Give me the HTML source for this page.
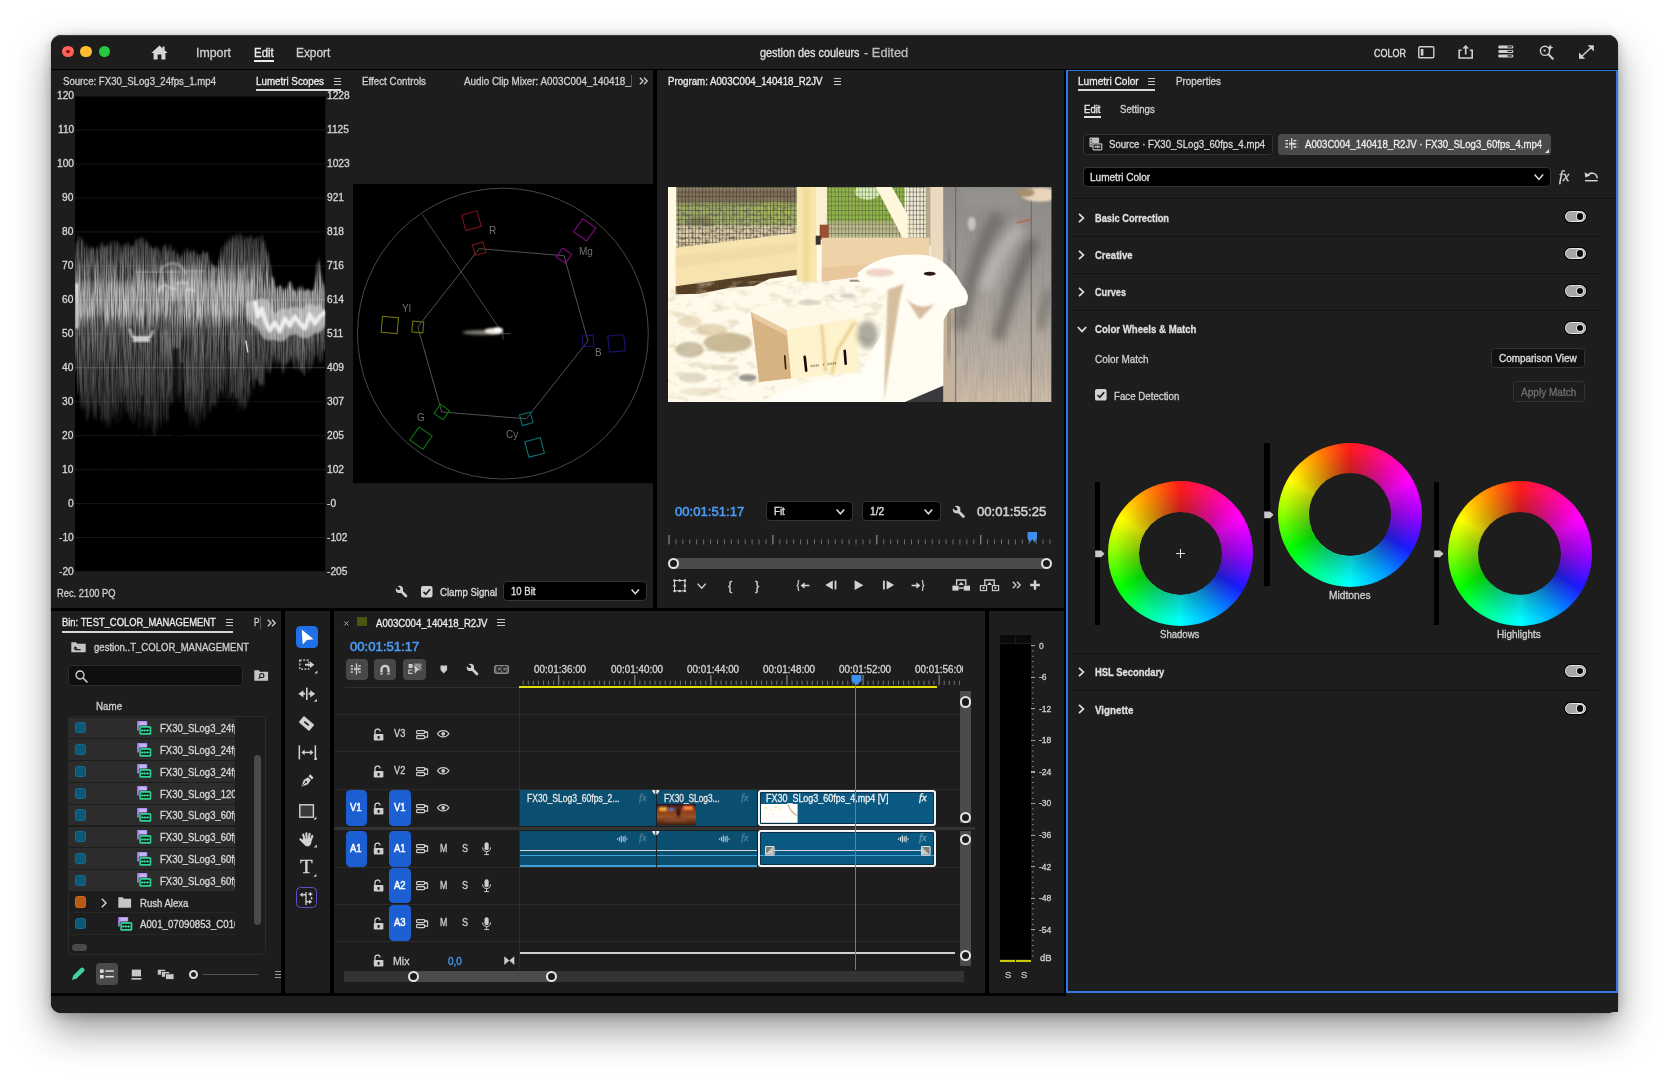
<!DOCTYPE html>
<html lang="en"><head><meta charset="utf-8"><title>gestion des couleurs - Edited</title>
<style>
html,body{margin:0;padding:0;background:#fff;}
body{width:1669px;height:1080px;position:relative;overflow:hidden;font-family:"Liberation Sans",sans-serif;}
#app div,#app svg,#app span.t{position:absolute;}
#app span.t{white-space:nowrap;transform-origin:0 50%;display:block;-webkit-text-stroke:0.32px currentColor;}
#app svg{overflow:visible;}
</style></head><body><div id="app">
<div id="win" style="left:51px;top:35px;width:1567px;height:977.5px;background:#000;border-radius:10px;box-shadow:0 0 1px rgba(0,0,0,.55),0 18px 38px rgba(0,0,0,.38),0 3px 12px rgba(0,0,0,.22);overflow:hidden"></div>
<div style="left:51.00px;top:35.00px;width:1567.00px;height:33.50px;background:#1d1d1d;border-radius:10px 10px 0 0;box-shadow:inset 0 1px 0 rgba(255,255,255,.13);"></div>
<div style="left:62.40px;top:45.90px;width:11.40px;height:11.40px;background:#fe5f57;border-radius:50%;"></div>
<div style="left:80.20px;top:45.90px;width:11.40px;height:11.40px;background:#febc2e;border-radius:50%;"></div>
<div style="left:98.60px;top:45.90px;width:11.40px;height:11.40px;background:#28c840;border-radius:50%;"></div>
<div style="left:66.40px;top:49.90px;width:3.40px;height:3.40px;background:#7a0f0a;border-radius:50%;"></div>
<svg style="left:151.00px;top:44.50px;" width="17" height="15" viewBox="0 0 17 15"><path d="M8.5 0.6 L0.3 8 H2.6 V14.6 H6.6 V9.6 H10.4 V14.6 H14.4 V8 H16.7 L13.6 5.2 V1.6 H11.6 V3.4 Z" fill="#d6d6d6"/></svg>
<span class="t" style="left:196.00px;top:46.40px;font-size:13px;line-height:13px;color:#cfcfcf;transform:scaleX(0.9500);">Import</span>
<span class="t" style="left:254.00px;top:46.40px;font-size:13px;line-height:13px;color:#ececec;transform:scaleX(0.8794);">Edit</span>
<div style="left:254.00px;top:59.60px;width:19.80px;height:2.00px;background:#ececec;"></div>
<span class="t" style="left:295.70px;top:46.40px;font-size:13px;line-height:13px;color:#cfcfcf;transform:scaleX(0.9129);">Export</span>
<span class="t" style="left:760.00px;top:46.40px;font-size:13px;line-height:13px;color:#e0e0e0;transform:scaleX(0.8344);">gestion des couleurs</span>
<span class="t" style="left:864.00px;top:46.40px;font-size:13px;line-height:13px;color:#bdbdbd;transform:scaleX(0.9865);">- Edited</span>
<span class="t" style="left:1373.70px;top:47.73px;font-size:11.5px;line-height:11.5px;color:#e0e0e0;transform:scaleX(0.7825);">COLOR</span>
<svg style="left:1418.00px;top:46.00px;" width="17" height="13" viewBox="0 0 17 13"><rect x="0.8" y="0.8" width="15" height="11" rx="1.2" fill="none" stroke="#cfcfcf" stroke-width="1.4"/><rect x="2.8" y="3" width="2.6" height="6.6" fill="#cfcfcf"/></svg>
<svg style="left:1458.00px;top:43.50px;" width="16" height="15" viewBox="0 0 16 15"><path d="M3.6 6.2 H1.2 V14 H14.2 V6.2 H11.8" fill="none" stroke="#cfcfcf" stroke-width="1.6"/><path d="M7.7 10.5 V2.4" stroke="#cfcfcf" stroke-width="1.6"/><path d="M4.3 4.6 L7.7 0.9 L11.1 4.6 Z" fill="#cfcfcf"/></svg>
<svg style="left:1498.00px;top:45.00px;" width="16" height="13" viewBox="0 0 16 13"><rect x="0.3" y="0.4" width="15" height="3" rx="1.2" fill="#cfcfcf"/><rect x="0.3" y="4.9" width="15" height="3" rx="1.2" fill="#cfcfcf"/><rect x="0.3" y="9.4" width="15" height="3" rx="1.2" fill="#cfcfcf"/><rect x="9.5" y="1.3" width="4.6" height="1.2" fill="#1d1d1d"/><rect x="9.5" y="5.8" width="4.6" height="1.2" fill="#1d1d1d"/><rect x="9.5" y="10.3" width="4.6" height="1.2" fill="#1d1d1d"/></svg>
<svg style="left:1538.50px;top:44.00px;" width="16" height="16" viewBox="0 0 16 16"><circle cx="6" cy="6.8" r="4.6" fill="none" stroke="#cfcfcf" stroke-width="1.4"/><path d="M9.4 10.2 L13.8 14.8" stroke="#cfcfcf" stroke-width="2" stroke-linecap="round"/><path d="M11.2 0.4 l0.9 2.2 l2.2 0.9 l-2.2 0.9 l-0.9 2.2 l-0.9 -2.2 l-2.2 -0.9 l2.2 -0.9 z" fill="#cfcfcf"/><circle cx="5.6" cy="6.6" r="1.1" fill="#cfcfcf"/></svg>
<svg style="left:1577.50px;top:43.50px;" width="17" height="16" viewBox="0 0 17 16"><path d="M2.2 13.8 L14.6 2.2" stroke="#cfcfcf" stroke-width="1.5"/><path d="M9.6 1.2 H15.8 V7.4 Z" fill="#cfcfcf"/><path d="M1 8.6 V14.8 H7.2 Z" fill="#cfcfcf"/></svg>
<div style="left:51.00px;top:70.00px;width:602.30px;height:537.50px;background:#1d1d1d;"></div>
<div style="left:656.80px;top:70.00px;width:407.00px;height:537.50px;background:#1d1d1d;"></div>
<div style="left:1066.40px;top:69.70px;width:551.60px;height:942.80px;background:#1d1d1d;"></div>
<div style="left:51.00px;top:611.00px;width:230.30px;height:382.00px;background:#1d1d1d;"></div>
<div style="left:285.00px;top:611.00px;width:45.20px;height:382.00px;background:#1d1d1d;"></div>
<div style="left:334.00px;top:611.00px;width:651.40px;height:382.00px;background:#1d1d1d;"></div>
<div style="left:989.00px;top:611.00px;width:74.80px;height:382.00px;background:#1d1d1d;"></div>
<div style="left:51.00px;top:996.00px;width:1567.00px;height:16.50px;background:#1d1d1d;border-radius:0 0 10px 10px;"></div>
<div style="left:1066.40px;top:69.70px;width:551.60px;height:1.60px;background:#2f78dc;"></div>
<div style="left:1066.40px;top:991.00px;width:551.60px;height:1.60px;background:#2f78dc;"></div>
<div style="left:1066.40px;top:69.70px;width:1.60px;height:922.90px;background:#2f78dc;"></div>
<div style="left:1616.30px;top:69.70px;width:1.70px;height:922.90px;background:#2f78dc;"></div>
<span class="t" style="left:62.50px;top:76.08px;font-size:11px;line-height:11px;color:#cfcfcf;transform:scaleX(0.8748);">Source: FX30_SLog3_24fps_1.mp4</span>
<span class="t" style="left:255.70px;top:76.08px;font-size:11px;line-height:11px;color:#ececec;transform:scaleX(0.8898);">Lumetri Scopes</span>
<div style="left:333.70px;top:77.70px;width:7.30px;height:1.10px;background:#c8c8c8;"></div>
<div style="left:333.70px;top:80.70px;width:7.30px;height:1.10px;background:#c8c8c8;"></div>
<div style="left:333.70px;top:83.70px;width:7.30px;height:1.10px;background:#c8c8c8;"></div>
<div style="left:255.50px;top:88.90px;width:85.50px;height:1.80px;background:#d8d8d8;"></div>
<span class="t" style="left:362.00px;top:76.08px;font-size:11px;line-height:11px;color:#cfcfcf;transform:scaleX(0.8896);">Effect Controls</span>
<span class="t" style="left:463.70px;top:76.08px;font-size:11px;line-height:11px;color:#cfcfcf;transform:scaleX(0.8943);">Audio Clip Mixer: A003C004_140418_</span>
<div style="left:631.30px;top:75.00px;width:0.90px;height:12.00px;background:#555;"></div>
<svg style="left:638.50px;top:77.20px;" width="10" height="8" viewBox="0 0 10 8"><path d="M0.8 0.8 L4 4 L0.8 7.2 M5 0.8 L8.2 4 L5 7.2" fill="none" stroke="#d0d0d0" stroke-width="1.3"/></svg>
<span class="t" style="left:56.78px;top:91.16px;font-size:10px;line-height:10px;color:#d4d4d4;transform:scaleX(1.0200);">120</span>
<span class="t" style="left:326.80px;top:91.16px;font-size:10px;line-height:10px;color:#d4d4d4;transform:scaleX(1.0200);">1228</span>
<span class="t" style="left:57.54px;top:125.13px;font-size:10px;line-height:10px;color:#d4d4d4;transform:scaleX(1.0200);">110</span>
<span class="t" style="left:326.80px;top:125.13px;font-size:10px;line-height:10px;color:#d4d4d4;transform:scaleX(1.0200);">1125</span>
<span class="t" style="left:56.78px;top:159.09px;font-size:10px;line-height:10px;color:#d4d4d4;transform:scaleX(1.0200);">100</span>
<span class="t" style="left:326.80px;top:159.09px;font-size:10px;line-height:10px;color:#d4d4d4;transform:scaleX(1.0200);">1023</span>
<span class="t" style="left:62.45px;top:193.06px;font-size:10px;line-height:10px;color:#d4d4d4;transform:scaleX(1.0200);">90</span>
<span class="t" style="left:326.80px;top:193.06px;font-size:10px;line-height:10px;color:#d4d4d4;transform:scaleX(1.0200);">921</span>
<span class="t" style="left:62.45px;top:227.02px;font-size:10px;line-height:10px;color:#d4d4d4;transform:scaleX(1.0200);">80</span>
<span class="t" style="left:326.80px;top:227.02px;font-size:10px;line-height:10px;color:#d4d4d4;transform:scaleX(1.0200);">818</span>
<span class="t" style="left:62.45px;top:260.99px;font-size:10px;line-height:10px;color:#d4d4d4;transform:scaleX(1.0200);">70</span>
<span class="t" style="left:326.80px;top:260.99px;font-size:10px;line-height:10px;color:#d4d4d4;transform:scaleX(1.0200);">716</span>
<span class="t" style="left:62.45px;top:294.95px;font-size:10px;line-height:10px;color:#d4d4d4;transform:scaleX(1.0200);">60</span>
<span class="t" style="left:326.80px;top:294.95px;font-size:10px;line-height:10px;color:#d4d4d4;transform:scaleX(1.0200);">614</span>
<span class="t" style="left:62.45px;top:328.92px;font-size:10px;line-height:10px;color:#d4d4d4;transform:scaleX(1.0200);">50</span>
<span class="t" style="left:326.80px;top:328.92px;font-size:10px;line-height:10px;color:#d4d4d4;transform:scaleX(1.0200);">511</span>
<span class="t" style="left:62.45px;top:362.88px;font-size:10px;line-height:10px;color:#d4d4d4;transform:scaleX(1.0200);">40</span>
<span class="t" style="left:326.80px;top:362.88px;font-size:10px;line-height:10px;color:#d4d4d4;transform:scaleX(1.0200);">409</span>
<span class="t" style="left:62.45px;top:396.84px;font-size:10px;line-height:10px;color:#d4d4d4;transform:scaleX(1.0200);">30</span>
<span class="t" style="left:326.80px;top:396.84px;font-size:10px;line-height:10px;color:#d4d4d4;transform:scaleX(1.0200);">307</span>
<span class="t" style="left:62.45px;top:430.81px;font-size:10px;line-height:10px;color:#d4d4d4;transform:scaleX(1.0200);">20</span>
<span class="t" style="left:326.80px;top:430.81px;font-size:10px;line-height:10px;color:#d4d4d4;transform:scaleX(1.0200);">205</span>
<span class="t" style="left:62.45px;top:464.77px;font-size:10px;line-height:10px;color:#d4d4d4;transform:scaleX(1.0200);">10</span>
<span class="t" style="left:326.80px;top:464.77px;font-size:10px;line-height:10px;color:#d4d4d4;transform:scaleX(1.0200);">102</span>
<span class="t" style="left:68.13px;top:498.74px;font-size:10px;line-height:10px;color:#d4d4d4;transform:scaleX(1.0200);">0</span>
<span class="t" style="left:326.80px;top:498.74px;font-size:10px;line-height:10px;color:#d4d4d4;transform:scaleX(1.0200);">-0</span>
<span class="t" style="left:59.06px;top:532.70px;font-size:10px;line-height:10px;color:#d4d4d4;transform:scaleX(1.0200);">-10</span>
<span class="t" style="left:326.80px;top:532.70px;font-size:10px;line-height:10px;color:#d4d4d4;transform:scaleX(1.0200);">-102</span>
<span class="t" style="left:59.06px;top:566.67px;font-size:10px;line-height:10px;color:#d4d4d4;transform:scaleX(1.0200);">-20</span>
<span class="t" style="left:326.80px;top:566.67px;font-size:10px;line-height:10px;color:#d4d4d4;transform:scaleX(1.0200);">-205</span>
<svg style="left:75.20px;top:95.50px;" width="250.3" height="475.5" viewBox="0 0 250.3 475.5"><rect x="0" y="0" width="250.3" height="475.5" fill="#000"/><rect x="0" y="-0.40" width="250.3" height="0.9" fill="#1a1a1a"/><rect x="0" y="33.56" width="250.3" height="0.9" fill="#1a1a1a"/><rect x="0" y="67.53" width="250.3" height="0.9" fill="#1a1a1a"/><rect x="0" y="101.49" width="250.3" height="0.9" fill="#1a1a1a"/><rect x="0" y="135.46" width="250.3" height="0.9" fill="#1a1a1a"/><rect x="0" y="169.42" width="250.3" height="0.9" fill="#1a1a1a"/><rect x="0" y="203.39" width="250.3" height="0.9" fill="#1a1a1a"/><rect x="0" y="237.35" width="250.3" height="0.9" fill="#1a1a1a"/><rect x="0" y="271.31" width="250.3" height="0.9" fill="#1a1a1a"/><rect x="0" y="305.28" width="250.3" height="0.9" fill="#1a1a1a"/><rect x="0" y="339.24" width="250.3" height="0.9" fill="#1a1a1a"/><rect x="0" y="373.21" width="250.3" height="0.9" fill="#1a1a1a"/><rect x="0" y="407.17" width="250.3" height="0.9" fill="#1a1a1a"/><rect x="0" y="441.14" width="250.3" height="0.9" fill="#1a1a1a"/><rect x="0" y="475.10" width="250.3" height="0.9" fill="#1a1a1a"/><defs><linearGradient id="wfg" gradientUnits="userSpaceOnUse" x1="0" y1="140.5" x2="0" y2="337.5"><stop offset="0.000" stop-color="#bcbcbc" stop-opacity="0.22"/><stop offset="0.112" stop-color="#bcbcbc" stop-opacity="0.4"/><stop offset="0.203" stop-color="#bcbcbc" stop-opacity="0.72"/><stop offset="0.274" stop-color="#bcbcbc" stop-opacity="0.95"/><stop offset="0.396" stop-color="#bcbcbc" stop-opacity="0.95"/><stop offset="0.467" stop-color="#bcbcbc" stop-opacity="0.52"/><stop offset="0.629" stop-color="#bcbcbc" stop-opacity="0.36"/><stop offset="0.822" stop-color="#bcbcbc" stop-opacity="0.22"/><stop offset="1.000" stop-color="#bcbcbc" stop-opacity="0.06"/></linearGradient><filter id="wfb" x="-5%" y="-5%" width="110%" height="110%"><feGaussianBlur stdDeviation="0.9"/></filter><filter id="wfb2" x="-5%" y="-20%" width="110%" height="140%"><feGaussianBlur stdDeviation="2.2"/></filter><filter id="wfn" x="-2%" y="-5%" width="104%" height="110%"><feTurbulence type="fractalNoise" baseFrequency="0.85 0.03" numOctaves="3" seed="4" result="n"/><feColorMatrix in="n" type="matrix" values="0 0 0 0 1  0 0 0 0 1  0 0 0 0 1  2.4 0 0 0 -0.62" result="a"/><feGaussianBlur in="SourceGraphic" stdDeviation="1.2" result="sg"/><feComposite in="sg" in2="a" operator="in"/></filter><filter id="wfw" filterUnits="userSpaceOnUse" x="170" y="180" width="90" height="90"><feGaussianBlur stdDeviation="0.9"/></filter><clipPath id="wfc"><rect x="0" y="0" width="250.3" height="475.5"/></clipPath><clipPath id="wfl"><rect x="0" y="0" width="179.8" height="475.5"/></clipPath></defs><g clip-path="url(#wfc)"><polygon points="-0.2,144.4 0.8,146.6 1.8,144.8 2.8,139.8 3.8,138.8 4.8,139.4 5.8,142.8 6.8,140.4 7.8,145.1 8.8,146.1 9.8,151.1 10.8,151.4 11.8,146.4 12.8,149.3 13.8,148.6 14.8,153.3 15.8,152.9 16.8,149.0 17.8,154.2 18.8,150.6 19.8,151.5 20.8,154.1 21.8,148.8 22.8,151.0 23.8,152.4 24.8,154.3 25.8,149.0 26.8,146.3 27.8,145.0 28.8,151.2 29.8,151.9 30.8,150.0 31.8,148.6 32.8,150.7 33.8,147.1 34.8,143.0 35.8,148.6 36.8,150.4 37.8,146.7 38.8,143.7 39.8,145.3 40.8,144.5 41.8,145.4 42.8,148.0 43.8,145.4 44.8,149.7 45.8,152.3 46.8,147.6 47.8,148.4 48.8,154.0 49.8,147.1 50.8,147.3 51.8,150.2 52.8,144.6 53.8,147.6 54.8,152.6 55.8,148.3 56.8,149.5 57.8,151.2 58.8,150.7 59.8,146.0 60.8,143.0 61.8,142.3 62.8,143.2 63.8,144.0 64.8,140.5 65.8,141.0 66.8,139.9 67.8,144.8 68.8,141.2 69.8,141.8 70.8,147.7 71.8,145.9 72.8,144.1 73.8,148.0 74.8,154.0 75.8,146.9 76.8,151.7 77.8,152.0 78.8,152.1 79.8,155.3 80.8,150.1 81.8,149.4 82.8,152.9 83.8,151.3 84.8,155.8 85.8,155.9 86.8,155.3 87.8,149.6 88.8,150.5 89.8,147.3 90.8,149.0 91.8,155.0 92.8,154.5 93.8,154.4 94.8,147.5 95.8,148.1 96.8,152.8 97.8,155.6 98.8,154.7 99.8,150.4 100.8,158.7 101.8,158.8 102.8,155.1 103.8,158.0 104.8,165.2 105.8,158.8 106.8,160.4 107.8,153.6 108.8,159.3 109.8,151.1 110.8,157.3 111.8,152.2 112.8,150.7 113.8,158.7 114.8,155.2 115.8,154.8 116.8,158.7 117.8,154.0 118.8,154.3 119.8,154.8 120.8,154.1 121.8,156.5 122.8,159.0 123.8,157.9 124.8,159.0 125.8,158.9 126.8,157.9 127.8,153.7 128.8,154.9 129.8,159.6 130.8,155.7 131.8,157.5 132.8,155.1 133.8,157.9 134.8,164.3 135.8,164.0 136.8,168.7 137.8,168.0 138.8,169.1 139.8,170.6 140.8,172.8 141.8,171.3 142.8,170.0 143.8,163.0 144.8,162.1 145.8,153.3 146.8,150.5 147.8,148.2 148.8,152.2 149.8,144.2 150.8,146.4 151.8,147.8 152.8,141.1 153.8,142.1 154.8,146.7 155.8,138.6 156.8,141.1 157.8,138.1 158.8,142.7 159.8,141.1 160.8,136.2 161.8,141.5 162.8,136.3 163.8,142.7 164.8,136.4 165.8,136.4 166.8,138.9 167.8,140.8 168.8,144.9 169.8,139.3 170.8,143.6 171.8,139.1 172.8,144.4 173.8,138.7 174.8,143.5 175.8,138.4 176.8,138.1 177.8,141.9 178.8,143.1 179.8,140.9 180.8,143.6 181.8,140.2 182.8,140.0 183.8,141.1 184.8,143.8 185.8,140.3 186.8,137.6 187.8,139.3 188.8,146.1 189.8,143.7 190.8,152.9 191.8,155.2 192.8,155.6 193.8,158.0 194.8,167.4 195.8,170.9 196.8,180.9 197.8,182.1 198.8,183.0 199.8,187.1 200.8,192.8 201.8,190.3 202.8,196.3 203.8,190.0 204.8,189.1 205.8,189.1 206.8,191.3 207.8,198.9 208.8,193.5 209.8,195.3 210.8,190.9 211.8,193.6 212.8,189.5 213.8,186.1 214.8,185.3 215.8,185.9 216.8,189.2 217.8,192.8 218.8,195.3 219.8,195.9 220.8,194.0 221.8,198.7 222.8,195.7 223.8,188.9 224.8,195.9 225.8,193.8 226.8,187.8 227.8,192.0 228.8,195.7 229.8,194.8 230.8,196.6 231.8,193.6 232.8,193.7 233.8,192.8 234.8,196.2 235.8,196.1 236.8,194.2 237.8,196.3 238.8,193.0 239.8,187.1 240.8,180.5 241.8,167.2 242.8,166.6 243.8,160.2 244.8,166.4 245.8,174.8 246.8,183.2 247.8,187.8 248.8,189.2 249.8,200.3 249.8,255.5 248.8,255.1 247.8,251.9 246.8,264.4 245.8,266.5 244.8,260.6 243.8,274.3 242.8,258.0 241.8,259.8 240.8,260.0 239.8,256.5 238.8,267.3 237.8,272.5 236.8,256.6 235.8,272.2 234.8,271.7 233.8,277.0 232.8,267.3 231.8,260.8 230.8,276.0 229.8,281.1 228.8,279.2 227.8,278.9 226.8,271.5 225.8,277.4 224.8,272.8 223.8,276.9 222.8,272.2 221.8,260.8 220.8,264.2 219.8,275.8 218.8,271.2 217.8,268.5 216.8,262.2 215.8,257.8 214.8,266.3 213.8,263.5 212.8,269.0 211.8,269.2 210.8,266.7 209.8,266.3 208.8,279.3 207.8,269.7 206.8,278.5 205.8,266.7 204.8,266.6 203.8,261.4 202.8,270.5 201.8,273.8 200.8,258.5 199.8,270.8 198.8,258.0 197.8,263.5 196.8,270.5 195.8,275.5 194.8,279.4 193.8,269.6 192.8,277.5 191.8,269.3 190.8,262.8 189.8,280.3 188.8,291.3 187.8,288.8 186.8,287.3 185.8,289.2 184.8,290.1 183.8,288.8 182.8,284.9 181.8,283.1 180.8,283.7 179.8,280.3 178.8,296.9 177.8,285.7 176.8,299.0 175.8,300.6 174.8,301.1 173.8,306.8 172.8,298.2 171.8,292.8 170.8,309.6 169.8,317.1 168.8,305.2 167.8,319.1 166.8,301.4 165.8,315.1 164.8,303.3 163.8,318.4 162.8,318.2 161.8,306.4 160.8,301.1 159.8,302.2 158.8,291.6 157.8,296.8 156.8,296.0 155.8,297.0 154.8,304.8 153.8,296.2 152.8,305.5 151.8,304.8 150.8,285.6 149.8,299.0 148.8,303.7 147.8,299.5 146.8,290.8 145.8,296.0 144.8,290.0 143.8,308.5 142.8,294.2 141.8,309.7 140.8,313.0 139.8,305.9 138.8,311.2 137.8,309.0 136.8,309.5 135.8,318.3 134.8,314.7 133.8,311.0 132.8,318.7 131.8,325.0 130.8,320.6 129.8,322.9 128.8,322.5 127.8,331.1 126.8,317.7 125.8,314.2 124.8,325.6 123.8,334.2 122.8,334.0 121.8,324.3 120.8,334.4 119.8,323.7 118.8,326.5 117.8,319.2 116.8,316.6 115.8,330.2 114.8,330.8 113.8,323.6 112.8,308.8 111.8,317.0 110.8,315.8 109.8,315.9 108.8,311.8 107.8,293.8 106.8,293.4 105.8,309.7 104.8,296.8 103.8,304.9 102.8,303.9 101.8,298.2 100.8,306.0 99.8,304.5 98.8,308.8 97.8,302.9 96.8,313.3 95.8,301.8 94.8,306.2 93.8,313.0 92.8,330.6 91.8,322.5 90.8,331.7 89.8,322.1 88.8,316.1 87.8,326.4 86.8,330.8 85.8,331.7 84.8,335.2 83.8,320.0 82.8,333.8 81.8,335.3 80.8,328.0 79.8,336.8 78.8,342.5 77.8,321.1 76.8,323.2 75.8,340.4 74.8,322.6 73.8,324.3 72.8,320.2 71.8,328.1 70.8,338.8 69.8,319.2 68.8,323.5 67.8,318.6 66.8,333.9 65.8,322.1 64.8,316.8 63.8,314.1 62.8,315.9 61.8,313.2 60.8,325.1 59.8,319.3 58.8,327.7 57.8,326.9 56.8,310.5 55.8,322.5 54.8,323.7 53.8,320.6 52.8,316.9 51.8,313.1 50.8,317.6 49.8,311.6 48.8,310.2 47.8,326.8 46.8,316.8 45.8,327.1 44.8,327.9 43.8,318.8 42.8,328.5 41.8,315.1 40.8,327.0 39.8,313.1 38.8,321.0 37.8,325.8 36.8,317.7 35.8,333.5 34.8,327.4 33.8,326.9 32.8,333.4 31.8,322.9 30.8,326.3 29.8,320.4 28.8,325.6 27.8,327.2 26.8,322.8 25.8,328.2 24.8,313.6 23.8,316.8 22.8,329.3 21.8,322.1 20.8,324.4 19.8,315.1 18.8,321.9 17.8,318.9 16.8,314.5 15.8,311.9 14.8,319.2 13.8,324.3 12.8,330.0 11.8,315.1 10.8,316.1 9.8,307.9 8.8,312.8 7.8,322.1 6.8,303.4 5.8,313.7 4.8,294.5 3.8,299.0 2.8,297.7 1.8,288.5 0.8,276.1 -0.2,271.8" fill="url(#wfg)" filter="url(#wfn)"/><polygon points="-0.2,144.4 0.8,146.6 1.8,144.8 2.8,139.8 3.8,138.8 4.8,139.4 5.8,142.8 6.8,140.4 7.8,145.1 8.8,146.1 9.8,151.1 10.8,151.4 11.8,146.4 12.8,149.3 13.8,148.6 14.8,153.3 15.8,152.9 16.8,149.0 17.8,154.2 18.8,150.6 19.8,151.5 20.8,154.1 21.8,148.8 22.8,151.0 23.8,152.4 24.8,154.3 25.8,149.0 26.8,146.3 27.8,145.0 28.8,151.2 29.8,151.9 30.8,150.0 31.8,148.6 32.8,150.7 33.8,147.1 34.8,143.0 35.8,148.6 36.8,150.4 37.8,146.7 38.8,143.7 39.8,145.3 40.8,144.5 41.8,145.4 42.8,148.0 43.8,145.4 44.8,149.7 45.8,152.3 46.8,147.6 47.8,148.4 48.8,154.0 49.8,147.1 50.8,147.3 51.8,150.2 52.8,144.6 53.8,147.6 54.8,152.6 55.8,148.3 56.8,149.5 57.8,151.2 58.8,150.7 59.8,146.0 60.8,143.0 61.8,142.3 62.8,143.2 63.8,144.0 64.8,140.5 65.8,141.0 66.8,139.9 67.8,144.8 68.8,141.2 69.8,141.8 70.8,147.7 71.8,145.9 72.8,144.1 73.8,148.0 74.8,154.0 75.8,146.9 76.8,151.7 77.8,152.0 78.8,152.1 79.8,155.3 80.8,150.1 81.8,149.4 82.8,152.9 83.8,151.3 84.8,155.8 85.8,155.9 86.8,155.3 87.8,149.6 88.8,150.5 89.8,147.3 90.8,149.0 91.8,155.0 92.8,154.5 93.8,154.4 94.8,147.5 95.8,148.1 96.8,152.8 97.8,155.6 98.8,154.7 99.8,150.4 100.8,158.7 101.8,158.8 102.8,155.1 103.8,158.0 104.8,165.2 105.8,158.8 106.8,160.4 107.8,153.6 108.8,159.3 109.8,151.1 110.8,157.3 111.8,152.2 112.8,150.7 113.8,158.7 114.8,155.2 115.8,154.8 116.8,158.7 117.8,154.0 118.8,154.3 119.8,154.8 120.8,154.1 121.8,156.5 122.8,159.0 123.8,157.9 124.8,159.0 125.8,158.9 126.8,157.9 127.8,153.7 128.8,154.9 129.8,159.6 130.8,155.7 131.8,157.5 132.8,155.1 133.8,157.9 134.8,164.3 135.8,164.0 136.8,168.7 137.8,168.0 138.8,169.1 139.8,170.6 140.8,172.8 141.8,171.3 142.8,170.0 143.8,163.0 144.8,162.1 145.8,153.3 146.8,150.5 147.8,148.2 148.8,152.2 149.8,144.2 150.8,146.4 151.8,147.8 152.8,141.1 153.8,142.1 154.8,146.7 155.8,138.6 156.8,141.1 157.8,138.1 158.8,142.7 159.8,141.1 160.8,136.2 161.8,141.5 162.8,136.3 163.8,142.7 164.8,136.4 165.8,136.4 166.8,138.9 167.8,140.8 168.8,144.9 169.8,139.3 170.8,143.6 171.8,139.1 172.8,144.4 173.8,138.7 174.8,143.5 175.8,138.4 176.8,138.1 177.8,141.9 178.8,143.1 179.8,140.9 180.8,143.6 181.8,140.2 182.8,140.0 183.8,141.1 184.8,143.8 185.8,140.3 186.8,137.6 187.8,139.3 188.8,146.1 189.8,143.7 190.8,152.9 191.8,155.2 192.8,155.6 193.8,158.0 194.8,167.4 195.8,170.9 196.8,180.9 197.8,182.1 198.8,183.0 199.8,187.1 200.8,192.8 201.8,190.3 202.8,196.3 203.8,190.0 204.8,189.1 205.8,189.1 206.8,191.3 207.8,198.9 208.8,193.5 209.8,195.3 210.8,190.9 211.8,193.6 212.8,189.5 213.8,186.1 214.8,185.3 215.8,185.9 216.8,189.2 217.8,192.8 218.8,195.3 219.8,195.9 220.8,194.0 221.8,198.7 222.8,195.7 223.8,188.9 224.8,195.9 225.8,193.8 226.8,187.8 227.8,192.0 228.8,195.7 229.8,194.8 230.8,196.6 231.8,193.6 232.8,193.7 233.8,192.8 234.8,196.2 235.8,196.1 236.8,194.2 237.8,196.3 238.8,193.0 239.8,187.1 240.8,180.5 241.8,167.2 242.8,166.6 243.8,160.2 244.8,166.4 245.8,174.8 246.8,183.2 247.8,187.8 248.8,189.2 249.8,200.3 249.8,255.5 248.8,255.1 247.8,251.9 246.8,264.4 245.8,266.5 244.8,260.6 243.8,274.3 242.8,258.0 241.8,259.8 240.8,260.0 239.8,256.5 238.8,267.3 237.8,272.5 236.8,256.6 235.8,272.2 234.8,271.7 233.8,277.0 232.8,267.3 231.8,260.8 230.8,276.0 229.8,281.1 228.8,279.2 227.8,278.9 226.8,271.5 225.8,277.4 224.8,272.8 223.8,276.9 222.8,272.2 221.8,260.8 220.8,264.2 219.8,275.8 218.8,271.2 217.8,268.5 216.8,262.2 215.8,257.8 214.8,266.3 213.8,263.5 212.8,269.0 211.8,269.2 210.8,266.7 209.8,266.3 208.8,279.3 207.8,269.7 206.8,278.5 205.8,266.7 204.8,266.6 203.8,261.4 202.8,270.5 201.8,273.8 200.8,258.5 199.8,270.8 198.8,258.0 197.8,263.5 196.8,270.5 195.8,275.5 194.8,279.4 193.8,269.6 192.8,277.5 191.8,269.3 190.8,262.8 189.8,280.3 188.8,291.3 187.8,288.8 186.8,287.3 185.8,289.2 184.8,290.1 183.8,288.8 182.8,284.9 181.8,283.1 180.8,283.7 179.8,280.3 178.8,296.9 177.8,285.7 176.8,299.0 175.8,300.6 174.8,301.1 173.8,306.8 172.8,298.2 171.8,292.8 170.8,309.6 169.8,317.1 168.8,305.2 167.8,319.1 166.8,301.4 165.8,315.1 164.8,303.3 163.8,318.4 162.8,318.2 161.8,306.4 160.8,301.1 159.8,302.2 158.8,291.6 157.8,296.8 156.8,296.0 155.8,297.0 154.8,304.8 153.8,296.2 152.8,305.5 151.8,304.8 150.8,285.6 149.8,299.0 148.8,303.7 147.8,299.5 146.8,290.8 145.8,296.0 144.8,290.0 143.8,308.5 142.8,294.2 141.8,309.7 140.8,313.0 139.8,305.9 138.8,311.2 137.8,309.0 136.8,309.5 135.8,318.3 134.8,314.7 133.8,311.0 132.8,318.7 131.8,325.0 130.8,320.6 129.8,322.9 128.8,322.5 127.8,331.1 126.8,317.7 125.8,314.2 124.8,325.6 123.8,334.2 122.8,334.0 121.8,324.3 120.8,334.4 119.8,323.7 118.8,326.5 117.8,319.2 116.8,316.6 115.8,330.2 114.8,330.8 113.8,323.6 112.8,308.8 111.8,317.0 110.8,315.8 109.8,315.9 108.8,311.8 107.8,293.8 106.8,293.4 105.8,309.7 104.8,296.8 103.8,304.9 102.8,303.9 101.8,298.2 100.8,306.0 99.8,304.5 98.8,308.8 97.8,302.9 96.8,313.3 95.8,301.8 94.8,306.2 93.8,313.0 92.8,330.6 91.8,322.5 90.8,331.7 89.8,322.1 88.8,316.1 87.8,326.4 86.8,330.8 85.8,331.7 84.8,335.2 83.8,320.0 82.8,333.8 81.8,335.3 80.8,328.0 79.8,336.8 78.8,342.5 77.8,321.1 76.8,323.2 75.8,340.4 74.8,322.6 73.8,324.3 72.8,320.2 71.8,328.1 70.8,338.8 69.8,319.2 68.8,323.5 67.8,318.6 66.8,333.9 65.8,322.1 64.8,316.8 63.8,314.1 62.8,315.9 61.8,313.2 60.8,325.1 59.8,319.3 58.8,327.7 57.8,326.9 56.8,310.5 55.8,322.5 54.8,323.7 53.8,320.6 52.8,316.9 51.8,313.1 50.8,317.6 49.8,311.6 48.8,310.2 47.8,326.8 46.8,316.8 45.8,327.1 44.8,327.9 43.8,318.8 42.8,328.5 41.8,315.1 40.8,327.0 39.8,313.1 38.8,321.0 37.8,325.8 36.8,317.7 35.8,333.5 34.8,327.4 33.8,326.9 32.8,333.4 31.8,322.9 30.8,326.3 29.8,320.4 28.8,325.6 27.8,327.2 26.8,322.8 25.8,328.2 24.8,313.6 23.8,316.8 22.8,329.3 21.8,322.1 20.8,324.4 19.8,315.1 18.8,321.9 17.8,318.9 16.8,314.5 15.8,311.9 14.8,319.2 13.8,324.3 12.8,330.0 11.8,315.1 10.8,316.1 9.8,307.9 8.8,312.8 7.8,322.1 6.8,303.4 5.8,313.7 4.8,294.5 3.8,299.0 2.8,297.7 1.8,288.5 0.8,276.1 -0.2,271.8" fill="url(#wfg)" filter="url(#wfb)" opacity=".3"/><g filter="url(#wfb)"><rect x="-0.2" y="149.2" width="1.0" height="105.8" fill="#fff" opacity="0.06"/><rect x="1.0" y="149.4" width="0.9" height="122.2" fill="#fff" opacity="0.09"/><rect x="1.6" y="161.9" width="0.9" height="110.6" fill="#000" opacity="0.29"/><rect x="2.9" y="150.9" width="1.3" height="137.7" fill="#fff" opacity="0.06"/><rect x="3.7" y="146.4" width="0.6" height="133.7" fill="#fff" opacity="0.15"/><rect x="4.9" y="200.8" width="0.9" height="109.2" fill="#000" opacity="0.15"/><rect x="5.5" y="141.0" width="0.6" height="157.0" fill="#fff" opacity="0.07"/><rect x="6.4" y="144.3" width="1.2" height="168.5" fill="#fff" opacity="0.13"/><rect x="7.1" y="179.2" width="0.8" height="131.1" fill="#000" opacity="0.16"/><rect x="8.5" y="148.4" width="0.5" height="153.5" fill="#fff" opacity="0.07"/><rect x="9.2" y="175.1" width="0.9" height="126.1" fill="#000" opacity="0.15"/><rect x="10.0" y="189.8" width="1.2" height="137.0" fill="#000" opacity="0.26"/><rect x="11.3" y="151.9" width="0.9" height="170.4" fill="#fff" opacity="0.13"/><rect x="12.5" y="154.5" width="0.6" height="153.6" fill="#fff" opacity="0.15"/><rect x="13.5" y="175.3" width="1.0" height="132.8" fill="#000" opacity="0.30"/><rect x="14.3" y="154.8" width="0.7" height="156.2" fill="#fff" opacity="0.05"/><rect x="15.7" y="187.4" width="0.6" height="116.9" fill="#000" opacity="0.30"/><rect x="16.4" y="151.2" width="0.7" height="157.0" fill="#fff" opacity="0.06"/><rect x="17.5" y="159.1" width="0.9" height="162.8" fill="#fff" opacity="0.08"/><rect x="18.4" y="153.3" width="0.6" height="144.1" fill="#fff" opacity="0.16"/><rect x="19.4" y="155.8" width="0.7" height="169.1" fill="#fff" opacity="0.07"/><rect x="20.3" y="164.7" width="0.5" height="163.4" fill="#000" opacity="0.27"/><rect x="21.5" y="157.7" width="0.8" height="154.2" fill="#fff" opacity="0.03"/><rect x="22.8" y="172.0" width="0.6" height="154.0" fill="#000" opacity="0.15"/><rect x="23.8" y="202.9" width="0.9" height="126.5" fill="#000" opacity="0.23"/><rect x="24.9" y="147.9" width="1.0" height="176.5" fill="#fff" opacity="0.15"/><rect x="25.7" y="164.1" width="0.6" height="142.1" fill="#000" opacity="0.24"/><rect x="26.7" y="152.8" width="0.5" height="158.8" fill="#fff" opacity="0.11"/><rect x="27.6" y="185.0" width="0.7" height="146.9" fill="#000" opacity="0.28"/><rect x="28.4" y="156.0" width="0.9" height="167.4" fill="#fff" opacity="0.03"/><rect x="29.5" y="171.6" width="0.5" height="136.7" fill="#000" opacity="0.29"/><rect x="30.4" y="150.0" width="1.1" height="173.2" fill="#fff" opacity="0.13"/><rect x="31.4" y="147.6" width="0.7" height="185.4" fill="#fff" opacity="0.14"/><rect x="32.1" y="172.3" width="0.7" height="136.9" fill="#000" opacity="0.20"/><rect x="33.1" y="151.7" width="0.7" height="180.1" fill="#fff" opacity="0.08"/><rect x="34.5" y="146.0" width="1.2" height="153.9" fill="#fff" opacity="0.08"/><rect x="35.8" y="171.3" width="1.2" height="161.3" fill="#000" opacity="0.17"/><rect x="37.0" y="145.4" width="0.8" height="175.2" fill="#fff" opacity="0.08"/><rect x="37.7" y="145.3" width="0.6" height="161.7" fill="#fff" opacity="0.15"/><rect x="39.1" y="179.3" width="0.5" height="129.9" fill="#000" opacity="0.26"/><rect x="40.0" y="149.5" width="1.2" height="179.0" fill="#fff" opacity="0.08"/><rect x="40.7" y="161.8" width="0.6" height="162.7" fill="#000" opacity="0.11"/><rect x="42.0" y="172.5" width="1.3" height="149.3" fill="#000" opacity="0.17"/><rect x="43.1" y="149.2" width="0.5" height="171.1" fill="#fff" opacity="0.07"/><rect x="44.3" y="177.6" width="0.9" height="139.3" fill="#000" opacity="0.10"/><rect x="45.7" y="156.4" width="0.9" height="151.2" fill="#fff" opacity="0.09"/><rect x="47.0" y="197.6" width="1.0" height="124.1" fill="#000" opacity="0.26"/><rect x="47.9" y="170.3" width="1.1" height="135.6" fill="#000" opacity="0.12"/><rect x="48.7" y="148.0" width="1.3" height="146.1" fill="#fff" opacity="0.07"/><rect x="50.0" y="157.3" width="0.9" height="144.5" fill="#fff" opacity="0.04"/><rect x="51.1" y="151.6" width="1.0" height="149.7" fill="#fff" opacity="0.11"/><rect x="52.3" y="155.2" width="0.7" height="161.6" fill="#fff" opacity="0.14"/><rect x="53.4" y="150.1" width="0.7" height="169.6" fill="#fff" opacity="0.06"/><rect x="54.1" y="155.0" width="1.3" height="159.4" fill="#fff" opacity="0.08"/><rect x="55.1" y="163.3" width="0.9" height="159.6" fill="#000" opacity="0.30"/><rect x="56.4" y="153.9" width="0.6" height="173.2" fill="#fff" opacity="0.07"/><rect x="57.1" y="208.3" width="0.9" height="107.5" fill="#000" opacity="0.17"/><rect x="57.9" y="152.8" width="1.0" height="176.0" fill="#fff" opacity="0.11"/><rect x="58.7" y="148.5" width="1.0" height="152.5" fill="#fff" opacity="0.06"/><rect x="59.8" y="146.5" width="0.6" height="150.4" fill="#fff" opacity="0.12"/><rect x="60.7" y="146.2" width="0.6" height="178.7" fill="#fff" opacity="0.04"/><rect x="61.6" y="149.3" width="1.1" height="170.7" fill="#fff" opacity="0.05"/><rect x="62.5" y="184.6" width="0.8" height="124.3" fill="#000" opacity="0.16"/><rect x="63.5" y="151.7" width="1.1" height="181.9" fill="#fff" opacity="0.06"/><rect x="64.2" y="142.8" width="0.8" height="187.9" fill="#fff" opacity="0.14"/><rect x="65.5" y="146.8" width="1.0" height="158.8" fill="#fff" opacity="0.10"/><rect x="66.9" y="142.6" width="0.6" height="179.9" fill="#fff" opacity="0.10"/><rect x="67.7" y="146.6" width="1.1" height="187.1" fill="#fff" opacity="0.09"/><rect x="69.1" y="176.9" width="0.5" height="129.6" fill="#000" opacity="0.30"/><rect x="70.4" y="163.4" width="1.1" height="171.1" fill="#000" opacity="0.26"/><rect x="71.2" y="167.7" width="0.8" height="165.2" fill="#000" opacity="0.14"/><rect x="72.2" y="148.2" width="1.2" height="159.8" fill="#fff" opacity="0.12"/><rect x="72.8" y="151.0" width="0.6" height="179.6" fill="#fff" opacity="0.14"/><rect x="73.9" y="152.6" width="1.0" height="173.9" fill="#fff" opacity="0.08"/><rect x="74.8" y="155.1" width="1.0" height="165.6" fill="#fff" opacity="0.03"/><rect x="75.8" y="170.0" width="0.9" height="162.2" fill="#000" opacity="0.19"/><rect x="76.5" y="150.1" width="0.9" height="170.8" fill="#fff" opacity="0.09"/><rect x="77.2" y="190.9" width="0.5" height="118.1" fill="#000" opacity="0.26"/><rect x="78.2" y="153.0" width="1.3" height="187.0" fill="#fff" opacity="0.14"/><rect x="79.3" y="215.4" width="1.2" height="98.7" fill="#000" opacity="0.20"/><rect x="80.1" y="157.4" width="1.1" height="182.2" fill="#fff" opacity="0.08"/><rect x="80.8" y="193.8" width="1.2" height="121.7" fill="#000" opacity="0.13"/><rect x="81.6" y="152.5" width="0.6" height="169.9" fill="#fff" opacity="0.03"/><rect x="82.3" y="208.6" width="0.6" height="118.7" fill="#000" opacity="0.13"/><rect x="83.3" y="195.6" width="1.2" height="118.9" fill="#000" opacity="0.21"/><rect x="84.0" y="160.3" width="0.7" height="162.5" fill="#fff" opacity="0.13"/><rect x="85.4" y="174.9" width="1.1" height="137.5" fill="#000" opacity="0.19"/><rect x="86.0" y="197.6" width="1.0" height="111.4" fill="#000" opacity="0.30"/><rect x="86.9" y="149.9" width="0.8" height="151.8" fill="#fff" opacity="0.11"/><rect x="87.9" y="158.5" width="0.5" height="147.1" fill="#fff" opacity="0.11"/><rect x="88.5" y="152.9" width="1.0" height="152.1" fill="#fff" opacity="0.06"/><rect x="89.6" y="151.1" width="1.2" height="172.6" fill="#fff" opacity="0.05"/><rect x="90.4" y="199.4" width="0.8" height="106.2" fill="#000" opacity="0.27"/><rect x="91.2" y="148.7" width="1.0" height="174.9" fill="#fff" opacity="0.08"/><rect x="92.1" y="157.7" width="0.5" height="165.4" fill="#fff" opacity="0.15"/><rect x="93.2" y="152.1" width="0.5" height="149.7" fill="#fff" opacity="0.13"/><rect x="94.2" y="157.1" width="0.9" height="137.3" fill="#fff" opacity="0.11"/><rect x="95.3" y="156.1" width="0.5" height="135.2" fill="#fff" opacity="0.07"/><rect x="96.6" y="156.9" width="1.1" height="148.3" fill="#fff" opacity="0.14"/><rect x="97.6" y="157.3" width="0.7" height="137.2" fill="#fff" opacity="0.04"/><rect x="98.2" y="199.3" width="0.7" height="104.8" fill="#000" opacity="0.27"/><rect x="99.3" y="155.6" width="1.0" height="148.6" fill="#fff" opacity="0.06"/><rect x="100.6" y="154.5" width="0.7" height="151.3" fill="#fff" opacity="0.06"/><rect x="101.8" y="163.5" width="0.8" height="136.2" fill="#fff" opacity="0.14"/><rect x="102.6" y="223.3" width="0.9" height="71.5" fill="#000" opacity="0.23"/><rect x="103.9" y="164.1" width="1.0" height="139.3" fill="#fff" opacity="0.12"/><rect x="104.8" y="160.5" width="0.6" height="135.3" fill="#fff" opacity="0.15"/><rect x="105.4" y="158.8" width="0.5" height="148.3" fill="#fff" opacity="0.05"/><rect x="106.0" y="177.1" width="1.0" height="120.1" fill="#000" opacity="0.25"/><rect x="106.9" y="217.3" width="1.2" height="87.2" fill="#000" opacity="0.11"/><rect x="108.3" y="155.0" width="1.2" height="130.4" fill="#fff" opacity="0.03"/><rect x="109.5" y="173.6" width="0.6" height="137.9" fill="#000" opacity="0.16"/><rect x="110.7" y="152.7" width="0.7" height="145.5" fill="#fff" opacity="0.03"/><rect x="111.5" y="158.0" width="0.9" height="144.8" fill="#fff" opacity="0.16"/><rect x="112.8" y="157.7" width="1.1" height="137.9" fill="#fff" opacity="0.09"/><rect x="113.7" y="159.0" width="0.6" height="155.1" fill="#fff" opacity="0.14"/><rect x="114.9" y="154.3" width="1.3" height="142.1" fill="#fff" opacity="0.13"/><rect x="115.6" y="192.4" width="0.8" height="121.6" fill="#000" opacity="0.14"/><rect x="116.8" y="155.9" width="1.1" height="175.1" fill="#fff" opacity="0.06"/><rect x="117.8" y="154.8" width="1.1" height="166.3" fill="#fff" opacity="0.13"/><rect x="119.0" y="160.5" width="1.2" height="151.8" fill="#fff" opacity="0.08"/><rect x="119.7" y="163.3" width="1.2" height="138.0" fill="#fff" opacity="0.06"/><rect x="120.7" y="158.7" width="0.9" height="172.7" fill="#fff" opacity="0.09"/><rect x="121.9" y="162.9" width="0.6" height="160.0" fill="#fff" opacity="0.07"/><rect x="123.2" y="162.5" width="1.1" height="163.6" fill="#fff" opacity="0.09"/><rect x="124.3" y="177.1" width="0.7" height="139.0" fill="#000" opacity="0.15"/><rect x="125.4" y="164.8" width="0.8" height="140.4" fill="#fff" opacity="0.06"/><rect x="126.4" y="157.6" width="1.1" height="153.5" fill="#fff" opacity="0.16"/><rect x="127.1" y="165.5" width="1.1" height="137.7" fill="#fff" opacity="0.16"/><rect x="128.3" y="180.2" width="0.8" height="125.5" fill="#000" opacity="0.12"/><rect x="128.9" y="200.9" width="0.9" height="124.6" fill="#000" opacity="0.20"/><rect x="129.6" y="192.7" width="1.0" height="118.4" fill="#000" opacity="0.28"/><rect x="130.8" y="207.7" width="1.1" height="95.5" fill="#000" opacity="0.28"/><rect x="132.1" y="161.8" width="1.0" height="154.0" fill="#fff" opacity="0.07"/><rect x="132.8" y="182.8" width="0.8" height="136.9" fill="#000" opacity="0.23"/><rect x="133.8" y="183.0" width="1.0" height="122.3" fill="#000" opacity="0.29"/><rect x="135.0" y="200.7" width="0.6" height="105.6" fill="#000" opacity="0.11"/><rect x="136.2" y="171.0" width="0.9" height="134.0" fill="#fff" opacity="0.10"/><rect x="137.4" y="199.3" width="1.3" height="107.7" fill="#000" opacity="0.20"/><rect x="138.2" y="231.3" width="0.8" height="65.7" fill="#000" opacity="0.12"/><rect x="138.8" y="169.3" width="0.8" height="126.7" fill="#fff" opacity="0.08"/><rect x="140.0" y="172.3" width="1.3" height="116.8" fill="#fff" opacity="0.13"/><rect x="141.0" y="172.0" width="0.6" height="133.9" fill="#fff" opacity="0.06"/><rect x="142.2" y="173.7" width="0.7" height="124.1" fill="#fff" opacity="0.10"/><rect x="143.6" y="197.7" width="0.7" height="98.6" fill="#000" opacity="0.26"/><rect x="144.6" y="158.4" width="0.7" height="143.9" fill="#fff" opacity="0.14"/><rect x="145.5" y="157.4" width="1.1" height="130.0" fill="#fff" opacity="0.03"/><rect x="146.3" y="155.4" width="1.0" height="127.1" fill="#fff" opacity="0.09"/><rect x="147.5" y="205.3" width="1.2" height="98.2" fill="#000" opacity="0.11"/><rect x="148.7" y="159.4" width="1.3" height="139.8" fill="#000" opacity="0.10"/><rect x="149.8" y="147.3" width="1.1" height="125.5" fill="#fff" opacity="0.06"/><rect x="150.7" y="198.8" width="1.0" height="101.4" fill="#000" opacity="0.13"/><rect x="151.9" y="168.3" width="1.1" height="132.6" fill="#000" opacity="0.27"/><rect x="152.9" y="171.7" width="0.7" height="114.3" fill="#000" opacity="0.21"/><rect x="153.7" y="145.5" width="0.9" height="127.9" fill="#fff" opacity="0.05"/><rect x="154.7" y="145.3" width="0.9" height="157.2" fill="#fff" opacity="0.14"/><rect x="155.7" y="145.9" width="1.3" height="156.9" fill="#fff" opacity="0.08"/><rect x="156.4" y="145.2" width="1.0" height="151.2" fill="#fff" opacity="0.11"/><rect x="157.7" y="141.7" width="1.2" height="168.4" fill="#fff" opacity="0.09"/><rect x="158.3" y="145.5" width="0.8" height="152.9" fill="#fff" opacity="0.14"/><rect x="159.3" y="143.4" width="0.8" height="161.4" fill="#fff" opacity="0.09"/><rect x="160.4" y="181.5" width="0.7" height="108.0" fill="#000" opacity="0.18"/><rect x="161.4" y="173.5" width="0.7" height="130.0" fill="#000" opacity="0.17"/><rect x="162.4" y="144.1" width="1.2" height="165.3" fill="#fff" opacity="0.12"/><rect x="163.5" y="138.2" width="1.2" height="155.2" fill="#fff" opacity="0.05"/><rect x="164.6" y="184.9" width="1.0" height="126.1" fill="#000" opacity="0.22"/><rect x="165.7" y="143.9" width="0.9" height="163.9" fill="#fff" opacity="0.12"/><rect x="166.9" y="139.6" width="1.2" height="151.3" fill="#fff" opacity="0.13"/><rect x="168.1" y="165.7" width="0.7" height="148.2" fill="#000" opacity="0.21"/><rect x="169.0" y="155.5" width="1.0" height="144.6" fill="#000" opacity="0.29"/><rect x="169.6" y="141.1" width="0.9" height="170.6" fill="#fff" opacity="0.15"/><rect x="170.2" y="177.9" width="0.8" height="124.5" fill="#000" opacity="0.30"/><rect x="170.9" y="146.9" width="0.5" height="140.4" fill="#fff" opacity="0.03"/><rect x="172.1" y="141.5" width="0.6" height="169.1" fill="#fff" opacity="0.14"/><rect x="172.7" y="159.9" width="1.1" height="123.8" fill="#000" opacity="0.14"/><rect x="173.8" y="148.5" width="1.1" height="149.0" fill="#fff" opacity="0.11"/><rect x="174.8" y="159.7" width="0.5" height="118.6" fill="#000" opacity="0.24"/><rect x="175.9" y="147.8" width="0.6" height="122.5" fill="#fff" opacity="0.12"/><rect x="177.2" y="144.5" width="0.9" height="122.8" fill="#fff" opacity="0.10"/><rect x="178.4" y="141.5" width="1.0" height="149.7" fill="#fff" opacity="0.11"/><rect x="179.3" y="182.5" width="0.7" height="108.0" fill="#000" opacity="0.26"/><rect x="179.9" y="190.6" width="1.3" height="97.7" fill="#000" opacity="0.17"/><rect x="181.2" y="147.0" width="0.8" height="128.7" fill="#fff" opacity="0.15"/><rect x="182.4" y="157.5" width="0.7" height="140.0" fill="#000" opacity="0.16"/><rect x="183.3" y="198.4" width="1.1" height="97.5" fill="#000" opacity="0.11"/><rect x="184.6" y="189.2" width="1.2" height="89.7" fill="#000" opacity="0.26"/><rect x="185.5" y="186.5" width="1.2" height="103.6" fill="#000" opacity="0.14"/><rect x="186.3" y="143.2" width="0.7" height="152.5" fill="#fff" opacity="0.06"/><rect x="187.5" y="146.1" width="1.1" height="144.0" fill="#fff" opacity="0.13"/><rect x="188.2" y="179.7" width="1.0" height="122.0" fill="#000" opacity="0.20"/><rect x="189.0" y="182.1" width="0.8" height="87.5" fill="#000" opacity="0.17"/><rect x="190.0" y="161.3" width="1.0" height="94.1" fill="#000" opacity="0.17"/><rect x="191.2" y="149.5" width="0.5" height="117.6" fill="#fff" opacity="0.10"/><rect x="191.9" y="160.0" width="0.7" height="116.1" fill="#fff" opacity="0.10"/><rect x="193.1" y="216.6" width="0.7" height="61.5" fill="#000" opacity="0.26"/><rect x="193.7" y="158.2" width="0.9" height="92.6" fill="#fff" opacity="0.04"/><rect x="195.0" y="209.1" width="0.8" height="67.7" fill="#000" opacity="0.11"/><rect x="195.7" y="178.8" width="1.3" height="73.4" fill="#fff" opacity="0.11"/><rect x="196.8" y="180.6" width="1.3" height="77.5" fill="#fff" opacity="0.16"/><rect x="197.6" y="180.2" width="1.2" height="70.7" fill="#fff" opacity="0.15"/><rect x="198.9" y="244.6" width="0.5" height="24.0" fill="#000" opacity="0.23"/><rect x="199.6" y="234.9" width="1.1" height="38.6" fill="#000" opacity="0.16"/><rect x="200.3" y="193.7" width="0.6" height="56.0" fill="#fff" opacity="0.09"/><rect x="201.1" y="193.6" width="0.7" height="71.1" fill="#fff" opacity="0.12"/><rect x="201.7" y="255.3" width="0.6" height="2.0" fill="#000" opacity="0.27"/><rect x="202.7" y="224.2" width="0.8" height="49.9" fill="#000" opacity="0.23"/><rect x="203.9" y="194.1" width="0.5" height="70.0" fill="#fff" opacity="0.06"/><rect x="205.1" y="225.0" width="0.6" height="22.7" fill="#000" opacity="0.15"/><rect x="205.9" y="198.2" width="0.8" height="56.4" fill="#fff" opacity="0.09"/><rect x="207.2" y="192.6" width="1.0" height="85.2" fill="#fff" opacity="0.15"/><rect x="208.0" y="197.1" width="0.8" height="56.7" fill="#fff" opacity="0.06"/><rect x="209.4" y="204.0" width="1.2" height="72.7" fill="#fff" opacity="0.07"/><rect x="210.0" y="251.7" width="0.8" height="3.0" fill="#000" opacity="0.10"/><rect x="210.8" y="193.0" width="0.8" height="80.5" fill="#fff" opacity="0.05"/><rect x="212.1" y="193.0" width="1.1" height="71.0" fill="#fff" opacity="0.05"/><rect x="213.3" y="190.9" width="0.9" height="55.7" fill="#fff" opacity="0.11"/><rect x="214.1" y="228.9" width="0.7" height="36.2" fill="#000" opacity="0.26"/><rect x="214.7" y="244.5" width="0.8" height="13.3" fill="#000" opacity="0.11"/><rect x="216.0" y="196.4" width="0.9" height="64.2" fill="#fff" opacity="0.15"/><rect x="217.3" y="209.8" width="0.8" height="39.7" fill="#000" opacity="0.17"/><rect x="218.4" y="190.1" width="0.6" height="70.9" fill="#fff" opacity="0.10"/><rect x="219.6" y="199.4" width="0.8" height="73.4" fill="#fff" opacity="0.12"/><rect x="220.8" y="228.7" width="0.9" height="44.8" fill="#000" opacity="0.20"/><rect x="221.8" y="192.1" width="0.6" height="85.3" fill="#fff" opacity="0.05"/><rect x="222.6" y="199.5" width="0.7" height="45.5" fill="#fff" opacity="0.12"/><rect x="223.2" y="196.9" width="0.6" height="67.5" fill="#fff" opacity="0.12"/><rect x="224.5" y="197.2" width="0.9" height="49.2" fill="#fff" opacity="0.09"/><rect x="225.3" y="190.7" width="1.2" height="68.7" fill="#fff" opacity="0.11"/><rect x="226.0" y="194.7" width="1.3" height="77.0" fill="#fff" opacity="0.14"/><rect x="226.9" y="192.8" width="1.3" height="82.6" fill="#fff" opacity="0.08"/><rect x="228.2" y="193.3" width="1.3" height="61.8" fill="#fff" opacity="0.09"/><rect x="229.4" y="236.1" width="1.3" height="39.7" fill="#000" opacity="0.11"/><rect x="230.8" y="231.5" width="0.6" height="30.1" fill="#000" opacity="0.17"/><rect x="231.7" y="198.5" width="1.1" height="48.4" fill="#fff" opacity="0.16"/><rect x="233.1" y="212.4" width="1.0" height="61.1" fill="#000" opacity="0.28"/><rect x="233.9" y="200.6" width="1.0" height="53.6" fill="#fff" opacity="0.15"/><rect x="234.7" y="223.7" width="1.0" height="35.5" fill="#000" opacity="0.16"/><rect x="235.4" y="198.7" width="0.9" height="78.3" fill="#fff" opacity="0.06"/><rect x="236.4" y="193.6" width="0.8" height="53.5" fill="#fff" opacity="0.07"/><rect x="237.2" y="194.0" width="1.0" height="51.4" fill="#fff" opacity="0.14"/><rect x="238.3" y="234.8" width="1.0" height="14.0" fill="#000" opacity="0.19"/><rect x="239.3" y="190.3" width="0.8" height="59.5" fill="#fff" opacity="0.10"/><rect x="240.3" y="217.3" width="0.9" height="35.8" fill="#000" opacity="0.15"/><rect x="241.1" y="196.5" width="1.2" height="54.2" fill="#000" opacity="0.13"/><rect x="242.1" y="167.2" width="0.6" height="86.3" fill="#fff" opacity="0.13"/><rect x="242.9" y="171.1" width="0.8" height="94.2" fill="#fff" opacity="0.07"/><rect x="244.0" y="210.5" width="1.1" height="58.0" fill="#000" opacity="0.20"/><rect x="245.2" y="188.8" width="1.2" height="76.6" fill="#000" opacity="0.28"/><rect x="245.8" y="180.3" width="1.0" height="77.6" fill="#fff" opacity="0.16"/><rect x="246.8" y="185.9" width="0.9" height="81.5" fill="#fff" opacity="0.08"/><rect x="247.7" y="190.9" width="0.8" height="55.6" fill="#fff" opacity="0.10"/><rect x="248.6" y="196.5" width="0.6" height="68.9" fill="#fff" opacity="0.09"/><rect x="249.4" y="194.9" width="1.2" height="60.3" fill="#fff" opacity="0.04"/><rect x="250.3" y="238.2" width="1.2" height="25.6" fill="#000" opacity="0.14"/></g><rect x="97.8" y="252.5" width="6" height="90" fill="#000" opacity=".7" filter="url(#wfb)"/><rect x="105.8" y="266.5" width="3" height="90" fill="#000" opacity=".7" filter="url(#wfb)"/><rect x="65.8" y="299.5" width="3" height="90" fill="#000" opacity=".7" filter="url(#wfb)"/><rect x="44.8" y="306.5" width="2" height="90" fill="#000" opacity=".7" filter="url(#wfb)"/><rect x="130.8" y="292.5" width="3" height="90" fill="#000" opacity=".7" filter="url(#wfb)"/><rect x="174.8" y="286.5" width="3" height="90" fill="#000" opacity=".7" filter="url(#wfb)"/><rect x="160.8" y="302.5" width="3" height="90" fill="#000" opacity=".7" filter="url(#wfb)"/><rect x="22.8" y="309.5" width="3" height="90" fill="#000" opacity=".7" filter="url(#wfb)"/><rect x="152.8" y="254.5" width="2" height="90" fill="#000" opacity=".7" filter="url(#wfb)"/><rect x="0" y="185.5" width="179.8" height="34" fill="#d8d8d8" opacity=".22" filter="url(#wfb2)" clip-path="url(#wfl)"/><rect x="89.8" y="172.5" width="88" height="30" fill="#ddd" opacity=".16" filter="url(#wfb2)"/><rect x="0" y="187.5" width="3.5" height="45" fill="#fff" opacity=".7" filter="url(#wfb)"/><polygon points="179.8,191.5 250.3,195.5 250.3,234.5 179.8,234.5" fill="#999" opacity=".35" filter="url(#wfb2)"/><polyline points="179.8,204.5 182.8,220.5 186.8,212.5 190.8,226.5 194.8,234.5 199.8,226.5 204.8,235.5 209.8,222.5 214.8,229.5 219.8,220.5 224.8,227.5 229.8,232.5 234.8,218.5 239.8,227.5 244.8,220.5 250.8,215.5" fill="none" stroke="#d4d4d4" stroke-width="20" stroke-linejoin="round" opacity=".6" filter="url(#wfw)"/><polyline points="179.8,204.5 182.8,220.5 186.8,212.5 190.8,226.5 194.8,234.5 199.8,226.5 204.8,235.5 209.8,222.5 214.8,229.5 219.8,220.5 224.8,227.5 229.8,232.5 234.8,218.5 239.8,227.5 244.8,220.5 250.8,215.5" fill="none" stroke="#fff" stroke-width="4.2" stroke-linejoin="round" opacity=".8" filter="url(#wfw)"/><path d="M54.3 232.5 L57.8 241.5 H74.8 L78.3 234.5" fill="none" stroke="#fff" stroke-width="1.8" opacity=".8" filter="url(#wfb)"/><rect x="57.8" y="241.0" width="17" height="5" fill="#f0f0f0" opacity=".8" filter="url(#wfb)"/><path d="M82.8 196.5 q4 -10 10 -6 t8 2 M100.8 188.5 q6 -4 12 0 M110.8 194.5 q5 -3 9 1 M84.8 174.5 q10 -12 22 -4 l4 8" fill="none" stroke="#fff" stroke-width="2" opacity=".45" filter="url(#wfb)"/><path d="M59.8 176.5 h45 M109.8 174.5 h20" fill="none" stroke="#fff" stroke-width="2.5" opacity=".22" filter="url(#wfb)"/><path d="M170.8 244.5 l2 12" stroke="#fff" stroke-width="1.5" opacity=".8"/><rect x="0" y="203.3" width="250.3" height="1" fill="#bbb" opacity=".35"/><rect x="0" y="271.2" width="250.3" height="1" fill="#999" opacity=".25"/></g></svg>
<span class="t" style="left:57.40px;top:587.58px;font-size:11px;line-height:11px;color:#cfcfcf;transform:scaleX(0.8481);">Rec. 2100 PQ</span>
<svg style="left:352.50px;top:184.00px;" width="300" height="299.2" viewBox="0 0 300 299.2"><rect x="0" y="0" width="300" height="299.2" fill="#000"/><circle cx="149.9" cy="149.6" r="145.4" fill="none" stroke="#484848" stroke-width="1"/><path d="M149.9 149.6 L69.2 30.3" stroke="#484848" stroke-width="1"/><polygon points="126.2,64.7 211.0,71.7 235.0,157.0 173.3,234.8 88.7,228.0 64.8,143.0" fill="none" stroke="#525252" stroke-width="1"/><rect x="120.7" y="59.2" width="11" height="11" fill="none" stroke="#7a1218" stroke-width="1.1" transform="rotate(-15 126.2 64.7)"/><rect x="110.4" y="28.7" width="16" height="16" fill="none" stroke="#7a1218" stroke-width="1.1" transform="rotate(-15 118.4 36.7)"/><rect x="205.5" y="66.2" width="11" height="11" fill="none" stroke="#7c0c7c" stroke-width="1.1" transform="rotate(35 211.0 71.7)"/><rect x="223.7" y="37.8" width="16" height="16" fill="none" stroke="#7c0c7c" stroke-width="1.1" transform="rotate(35 231.7 45.8)"/><rect x="229.5" y="151.5" width="11" height="11" fill="none" stroke="#161672" stroke-width="1.1" transform="rotate(-5 235.0 157.0)"/><rect x="255.5" y="151.4" width="16" height="16" fill="none" stroke="#161672" stroke-width="1.1" transform="rotate(-5 263.5 159.4)"/><rect x="167.8" y="229.3" width="11" height="11" fill="none" stroke="#0c7070" stroke-width="1.1" transform="rotate(-15 173.3 234.8)"/><rect x="173.6" y="255.5" width="16" height="16" fill="none" stroke="#0c7070" stroke-width="1.1" transform="rotate(-15 181.6 263.5)"/><rect x="83.2" y="222.5" width="11" height="11" fill="none" stroke="#0c760c" stroke-width="1.1" transform="rotate(35 88.7 228.0)"/><rect x="60.0" y="246.1" width="16" height="16" fill="none" stroke="#0c760c" stroke-width="1.1" transform="rotate(35 68.0 254.1)"/><rect x="59.3" y="137.5" width="11" height="11" fill="none" stroke="#70700e" stroke-width="1.1" transform="rotate(5 64.8 143.0)"/><rect x="28.8" y="133.0" width="16" height="16" fill="none" stroke="#70700e" stroke-width="1.1" transform="rotate(5 36.8 141.0)"/><path d="M149.9 143.6 v12 M143.9 149.6 h14" stroke="#555" stroke-width="0.8"/><defs><filter id="vb" x="-20%" y="-100%" width="140%" height="300%"><feGaussianBlur stdDeviation="1.6"/></filter><filter id="vb1" x="-20%" y="-100%" width="140%" height="300%"><feGaussianBlur stdDeviation="0.8"/></filter></defs><ellipse cx="129.5" cy="148.5" rx="20" ry="2.2" fill="#c8c4b4" opacity=".7" filter="url(#vb)"/><ellipse cx="140.5" cy="147" rx="9" ry="3" fill="#f4f0e4" opacity=".95" filter="url(#vb1)"/><ellipse cx="145.0" cy="146" rx="4" ry="2.4" fill="#fff" filter="url(#vb1)"/></svg>
<span class="t" style="left:488.80px;top:224.82px;font-size:10.5px;line-height:10.5px;color:#727272;transform:scaleX(0.9500);-webkit-text-stroke:0;">R</span>
<span class="t" style="left:578.87px;top:246.32px;font-size:10.5px;line-height:10.5px;color:#727272;transform:scaleX(0.9500);-webkit-text-stroke:0;">Mg</span>
<span class="t" style="left:594.97px;top:346.72px;font-size:10.5px;line-height:10.5px;color:#727272;transform:scaleX(0.9500);-webkit-text-stroke:0;">B</span>
<span class="t" style="left:505.70px;top:429.12px;font-size:10.5px;line-height:10.5px;color:#727272;transform:scaleX(0.9500);-webkit-text-stroke:0;">Cy</span>
<span class="t" style="left:417.42px;top:411.62px;font-size:10.5px;line-height:10.5px;color:#727272;transform:scaleX(0.9500);-webkit-text-stroke:0;">G</span>
<span class="t" style="left:402.47px;top:302.62px;font-size:10.5px;line-height:10.5px;color:#727272;transform:scaleX(0.9500);-webkit-text-stroke:0;">Yl</span>
<svg style="left:395.00px;top:584.70px;" width="13" height="13" viewBox="0 0 13.5 13.5"><path d="M6 6 L11.4 11.4" stroke="#cfcfcf" stroke-width="2.8" stroke-linecap="round"/><circle cx="4.6" cy="4.6" r="3.8" fill="#cfcfcf"/><path d="M3.9 3.9 L-0.5 0.3" stroke="#1d1d1d" stroke-width="3" /><circle cx="4" cy="4" r="1.5" fill="#1d1d1d"/></svg>
<svg style="left:420.50px;top:585.60px;" width="11.5" height="11.5" viewBox="0 0 12 12"><rect x="0" y="0" width="12" height="12" rx="2" fill="#d2d2d2"/><path d="M2.6 6.2 L5 8.6 L9.5 3.3" fill="none" stroke="#1a1a1a" stroke-width="1.7"/></svg>
<span class="t" style="left:439.90px;top:586.68px;font-size:11px;line-height:11px;color:#dcdcdc;transform:scaleX(0.8728);">Clamp Signal</span>
<div style="left:503.00px;top:581.00px;width:143.80px;height:20.00px;background:#000;border:1px solid #353535;border-radius:4px;box-sizing:border-box;"></div>
<span class="t" style="left:511.00px;top:586.28px;font-size:11px;line-height:11px;color:#e0e0e0;transform:scaleX(0.8674);">10 Bit</span>
<svg style="left:630.70px;top:588.63px;" width="8.599999999999909" height="5.729999999999951" viewBox="0 0 8.599999999999909 5.729999999999951"><path d="M0.6 0.6 L4.30 4.73 L8.00 0.6" fill="none" stroke="#e0e0e0" stroke-width="1.5"/></svg>
<span class="t" style="left:667.50px;top:76.08px;font-size:11px;line-height:11px;color:#ececec;transform:scaleX(0.8803);">Program: A003C004_140418_R2JV</span>
<div style="left:833.70px;top:77.70px;width:7.10px;height:1.10px;background:#c8c8c8;"></div>
<div style="left:833.70px;top:80.70px;width:7.10px;height:1.10px;background:#c8c8c8;"></div>
<div style="left:833.70px;top:83.70px;width:7.10px;height:1.10px;background:#c8c8c8;"></div>
<svg style="left:668.30px;top:187.30px;" width="383.4" height="215.1" viewBox="0 0 383.4 215.1"><defs><clipPath id="pc"><rect x="0" y="0" width="383.4" height="215.1"/></clipPath><filter id="pb1" x="-10%" y="-10%" width="120%" height="120%"><feGaussianBlur stdDeviation="1"/></filter><filter id="pb2" x="-20%" y="-20%" width="140%" height="140%"><feGaussianBlur stdDeviation="2.5"/></filter><filter id="pb4" x="-30%" y="-30%" width="160%" height="160%"><feGaussianBlur stdDeviation="5"/></filter><filter id="nfol" x="0" y="0" width="100%" height="100%"><feTurbulence type="fractalNoise" baseFrequency="0.22 0.3" numOctaves="3" seed="5"/><feColorMatrix type="matrix" values="0 0 0 0 0.22  0 0 0 0 0.2  0 0 0 0 0.12  2.6 0 0 0 -1.15"/></filter><filter id="nsand" x="0" y="0" width="100%" height="100%"><feTurbulence type="fractalNoise" baseFrequency="0.07 0.12" numOctaves="3" seed="11"/><feColorMatrix type="matrix" values="0 0 0 0 0.66  0 0 0 0 0.57  0 0 0 0 0.4  3 0 0 0 -1.55"/></filter><filter id="nwall" x="0" y="0" width="100%" height="100%"><feTurbulence type="fractalNoise" baseFrequency="0.6 0.03" numOctaves="3" seed="8"/><feColorMatrix type="matrix" values="0 0 0 0 0.25  0 0 0 0 0.24  0 0 0 0 0.23  1.6 0 0 0 -0.7"/></filter><linearGradient id="wall" x1="0" y1="0" x2="0" y2="1"><stop offset="0" stop-color="#8d8a87"/><stop offset=".45" stop-color="#a19c97"/><stop offset=".8" stop-color="#b9aea2"/><stop offset="1" stop-color="#cdbba6"/></linearGradient><pattern id="mesh" width="3.4" height="4.6" patternUnits="userSpaceOnUse"><rect width="3.4" height="4.6" fill="none"/><path d="M0 0 V4.6 M0 0 H3.4" stroke="#2b2b2b" stroke-width="1" opacity=".85"/></pattern></defs><g clip-path="url(#pc)"><rect x="0" y="0" width="383.4" height="215.1" fill="#fffaea"/><rect x="7.7" y="0" width="129" height="62.7" fill="#b9b48a"/><rect x="7.7" y="12.7" width="129" height="26" fill="#9db35a" opacity=".75" filter="url(#pb2)"/><rect x="7.7" y="0" width="129" height="16" fill="#6e5444" opacity=".75" filter="url(#pb2)"/><ellipse cx="31.7" cy="37.7" rx="14" ry="8" fill="#6a5a4c" opacity=".6" filter="url(#pb2)"/><ellipse cx="106.7" cy="24.7" rx="16" ry="10" fill="#a9c24e" opacity=".7" filter="url(#pb2)"/><path d="M51.7 60.7 l6 -16 h7 l-5 16 z M101.7 52.7 l4 -10 h6 l-3 10 z" fill="#5c5048" opacity=".8"/><rect x="7.7" y="38.7" width="129" height="22" fill="#e7d5b0" opacity=".9" filter="url(#pb1)"/><rect x="7.7" y="0" width="129" height="58.7" filter="url(#nfol)"/><rect x="7.7" y="0" width="129" height="62.7" fill="url(#mesh)"/><rect x="0" y="0" width="8.2" height="215.1" fill="#fff8e4"/><rect x="158.7" y="0" width="78" height="48.7" fill="#8fb24a"/><rect x="158.7" y="34.7" width="78" height="16" fill="#b9b98a" filter="url(#pb1)"/><ellipse cx="199.7" cy="4.7" rx="13" ry="8" fill="#d5efb4"/><rect x="158.7" y="0" width="103" height="52.7" fill="url(#mesh)" opacity=".75"/><polygon points="207.7,-0.3 223.7,-0.3 253.7,52.7 235.7,52.7" fill="#fff6dc"/><rect x="239.7" y="0" width="18" height="52.7" fill="#e6dcc0" opacity=".55"/><rect x="239.7" y="0" width="18" height="52.7" fill="url(#mesh)" opacity=".8"/><rect x="257.7" y="0" width="5" height="58.7" fill="#b5a68c"/><rect x="262.7" y="0" width="13.5" height="112.7" fill="#eadbc0"/><polygon points="7.7,60.7 131.7,45.7 134.7,82.7 7.7,99.7" fill="#f6e3b0"/><polygon points="7.7,68.7 131.7,54.7 131.7,64.7 7.7,80.7" fill="#f1d9a6" opacity=".8" filter="url(#pb1)"/><polygon points="7.7,99.2 131.7,82.2 131.7,87.7 101.7,91.7 86.7,98.7 61.7,100.7 31.7,106.7 7.7,107.2" fill="#5a4125"/><polygon points="7.7,99.2 131.7,82.2 131.7,87.7 101.7,91.7 86.7,98.7 61.7,100.7 31.7,106.7 7.7,107.2" fill="url(#mesh)" opacity=".5"/><rect x="128.7" y="0" width="20" height="94.7" fill="#f7e6b0"/><rect x="134.7" y="0" width="7" height="94.7" fill="#f1d890" opacity=".7" filter="url(#pb1)"/><rect x="148.7" y="0" width="10" height="48.7" fill="#fbf0d2"/><rect x="151.7" y="37.7" width="9" height="15" fill="#9a4f33"/><rect x="147.7" y="48.7" width="5" height="9" fill="#3a3330"/><polygon points="153.7,50.7 261.7,50.7 261.7,77.7 211.7,84.7 153.7,91.7" fill="#efd3a8"/><polygon points="153.7,80.7 231.7,74.7 231.7,84.7 153.7,94.7" fill="#e9c79c"/><rect x="181.7" y="92.7" width="40" height="2" fill="#5a4030" opacity=".6"/><polygon points="-0.3,108.7 31.7,106.7 91.7,98.7 131.7,94.7 191.7,96.7 215.7,112.7 215.7,215.1 -0.3,215.1" filter="url(#nsand)" opacity=".55"/><ellipse cx="59.7" cy="155.7" rx="24" ry="10" fill="#b9a67c" opacity="0.75" filter="url(#pb1)"/><ellipse cx="21.7" cy="162.7" rx="14" ry="8" fill="#b3a486" opacity="0.65" filter="url(#pb1)"/><ellipse cx="43.7" cy="142.7" rx="16" ry="6" fill="#d6c39a" opacity="0.6" filter="url(#pb1)"/><ellipse cx="21.7" cy="134.7" rx="12" ry="6" fill="#dcc9a2" opacity="0.55" filter="url(#pb1)"/><ellipse cx="24.7" cy="190.7" rx="14" ry="5" fill="#cdbfa6" opacity="0.55" filter="url(#pb1)"/><ellipse cx="79.7" cy="190.7" rx="9" ry="3.5" fill="#6a6a68" opacity="0.7" filter="url(#pb1)"/><ellipse cx="56.7" cy="180.7" rx="14" ry="3" fill="#cfbfa4" opacity="0.55" filter="url(#pb1)"/><ellipse cx="31.7" cy="204.7" rx="20" ry="4" fill="#e0d2b8" opacity="0.5" filter="url(#pb1)"/><ellipse cx="141.7" cy="115.7" rx="12" ry="3" fill="#c0b8a8" opacity="0.55" filter="url(#pb1)"/><ellipse cx="156.7" cy="123.7" rx="10" ry="3" fill="#c8c0b0" opacity="0.5" filter="url(#pb1)"/><ellipse cx="179.7" cy="108.7" rx="8" ry="2.5" fill="#aaa" opacity="0.5" filter="url(#pb1)"/><ellipse cx="151.7" cy="204.7" rx="6" ry="4" fill="#d0c4b0" opacity="0.6" filter="url(#pb1)"/><polygon points="118.7,142.7 188.7,130.7 189.7,184.7 122.7,191.7" fill="#fdf3cc"/><polygon points="82.9,124.7 118.7,143.0 123.1,191.4 91.1,195.2" fill="#d7b283"/><polygon points="82.9,124.7 118.7,143.0 118.7,148.7 85.7,131.7" fill="#e8cba0"/><polygon points="82.9,124.7 118.7,142.7 188.7,130.7 151.7,117.7" fill="#fff8e6"/><path d="M153.7 137.7 L157.7 184.7 M186.7 134.7 L169.7 162.7 L163.7 187.7" stroke="#e3b866" stroke-width="3" fill="none" opacity=".6" filter="url(#pb1)"/><path d="M136.7 169.7 L138.2 183.7" stroke="#140c06" stroke-width="2.6" stroke-linecap="round"/><path d="M176.7 163.7 L177.7 176.7" stroke="#140c06" stroke-width="2.6" stroke-linecap="round"/><path d="M116.7 168.7 L117.7 181.7" stroke="#2c1d10" stroke-width="1.6" stroke-linecap="round"/><path d="M142.7 179.1 l9 -0.9 M154.7 177.7 l2 -0.2 M159.7 177.1 l9 -1" stroke="#7d6c55" stroke-width="2.2" stroke-dasharray="1.1 0.7" opacity=".75"/><rect x="275.2" y="0" width="108.2" height="215.1" fill="url(#wall)"/><rect x="286.7" y="0" width="96.7" height="215.1" filter="url(#nwall)" opacity=".55"/><rect x="275.2" y="112.7" width="11" height="102.4" fill="#c5b29a"/><rect x="287.2" y="0" width="1" height="215.1" fill="#5c5650" opacity=".8"/><rect x="362.7" y="0" width="1.2" height="215.1" fill="#6a625a" opacity=".8"/><path d="M331.7 27.7 Q306.7 62.7 291.7 142.7" stroke="#5c5a58" stroke-width="14" fill="none" opacity=".6" filter="url(#pb4)"/><path d="M366.7 52.7 Q341.7 102.7 329.7 152.7" stroke="#55534f" stroke-width="12" fill="none" opacity=".65" filter="url(#pb4)"/><path d="M381.7 102.7 Q375.7 122.7 371.7 142.7" stroke="#55534f" stroke-width="8" fill="none" opacity=".55" filter="url(#pb4)"/><path d="M281.7 62.7 L279.7 172.7" stroke="#6a6662" stroke-width="8" fill="none" opacity=".55" filter="url(#pb4)"/><path d="M353.7 40.7 Q331.7 57.7 316.7 102.7" stroke="#c9c6c2" stroke-width="14" fill="none" opacity=".6" filter="url(#pb4)"/><rect x="293.7" y="0" width="60" height="20" fill="#9a9895" opacity=".6" filter="url(#pb4)"/><ellipse cx="303.7" cy="36.7" rx="4" ry="7" fill="#d4d0cc" opacity=".8" filter="url(#pb1)"/><ellipse cx="371.7" cy="7.7" rx="18" ry="7" fill="#e8d6bc" filter="url(#pb1)"/><ellipse cx="357.7" cy="5.7" rx="9" ry="4" fill="#a8906c" filter="url(#pb1)"/><path d="M348.7 35.7 l14 -3" stroke="#b5654a" stroke-width="2" opacity=".8"/><path d="M215.7 215.1 L217.7 112.7 Q217.7 100.7 227.7 98.7 L293.7 102.7 L275.7 132.7 L275.2 200.7 L236.7 215.1 Z" fill="#fffdf2"/><path d="M189.7 85.7 Q216.7 62.7 261.7 68.7 Q281.7 74.7 293.7 97.7 Q303.7 108.7 297.7 117.7 L271.7 124.7 L231.7 112.7 Q201.7 102.7 189.7 92.7 Z" fill="#fffdf4"/><ellipse cx="211.7" cy="85.7" rx="14" ry="4" fill="#e9c3b4" opacity=".7" filter="url(#pb1)"/><ellipse cx="261.7" cy="86.7" rx="6" ry="2" fill="#2a1a14"/><path d="M215.7 214.7 L219.7 102.7 L235.7 96.7 L231.7 112.7 Z" fill="#c9ab84" opacity=".75" filter="url(#pb1)"/><path d="M237.7 110.7 Q249.7 124.7 266.7 116.7 L251.7 132.7 Z" fill="#c8a07c" opacity=".7" filter="url(#pb1)"/><ellipse cx="199.7" cy="147.7" rx="10" ry="14" fill="#77746a" opacity=".6" filter="url(#pb2)"/><path d="M91.7 215.1 Q131.7 192.7 191.7 186.7 L215.7 142.7 L215.7 215.1 Z" fill="#fffef6"/><polygon points="236.7,215.1 275.2,198.7 275.2,215.1" fill="#3a3a3e"/></g></svg>
<span class="t" style="left:675.20px;top:505.26px;font-size:13.5px;line-height:13.5px;color:#4a9df8;transform:scaleX(0.9704);-webkit-text-stroke:0.55px currentColor;">00:01:51:17</span>
<div style="left:765.80px;top:500.90px;width:86.80px;height:20.60px;background:#000;border:1px solid #353535;border-radius:4px;box-sizing:border-box;"></div>
<span class="t" style="left:773.80px;top:506.48px;font-size:11px;line-height:11px;color:#e0e0e0;transform:scaleX(0.8839);">Fit</span>
<svg style="left:835.50px;top:508.78px;" width="8.799999999999955" height="5.839999999999975" viewBox="0 0 8.799999999999955 5.839999999999975"><path d="M0.6 0.6 L4.40 4.84 L8.20 0.6" fill="none" stroke="#e0e0e0" stroke-width="1.5"/></svg>
<div style="left:861.90px;top:500.90px;width:78.70px;height:20.60px;background:#000;border:1px solid #353535;border-radius:4px;box-sizing:border-box;"></div>
<span class="t" style="left:870.20px;top:506.48px;font-size:11px;line-height:11px;color:#e0e0e0;transform:scaleX(0.9352);">1/2</span>
<svg style="left:923.50px;top:508.78px;" width="8.799999999999955" height="5.839999999999975" viewBox="0 0 8.799999999999955 5.839999999999975"><path d="M0.6 0.6 L4.40 4.84 L8.20 0.6" fill="none" stroke="#e0e0e0" stroke-width="1.5"/></svg>
<svg style="left:951.75px;top:504.55px;" width="13.5" height="13.5" viewBox="0 0 13.5 13.5"><path d="M6 6 L11.4 11.4" stroke="#cfcfcf" stroke-width="2.8" stroke-linecap="round"/><circle cx="4.6" cy="4.6" r="3.8" fill="#cfcfcf"/><path d="M3.9 3.9 L-0.5 0.3" stroke="#1d1d1d" stroke-width="3" /><circle cx="4" cy="4" r="1.5" fill="#1d1d1d"/></svg>
<span class="t" style="left:977.10px;top:505.26px;font-size:13.5px;line-height:13.5px;color:#d2d2d2;transform:scaleX(0.9704);-webkit-text-stroke:0.5px currentColor;">00:01:55:25</span>
<svg style="left:668.90px;top:534.80px;" width="383" height="10" viewBox="0 0 383 10"><rect x="-0.60" y="0" width="1.2" height="9.4" fill="#8a8a8a"/><rect x="6.43" y="4.4" width="1" height="5" fill="#6e6e6e"/><rect x="13.35" y="4.4" width="1" height="5" fill="#6e6e6e"/><rect x="20.28" y="4.4" width="1" height="5" fill="#6e6e6e"/><rect x="27.21" y="4.4" width="1" height="5" fill="#6e6e6e"/><rect x="34.13" y="4.4" width="1" height="5" fill="#6e6e6e"/><rect x="41.06" y="4.4" width="1" height="5" fill="#6e6e6e"/><rect x="47.99" y="4.4" width="1" height="5" fill="#6e6e6e"/><rect x="54.92" y="4.4" width="1" height="5" fill="#6e6e6e"/><rect x="61.84" y="4.4" width="1" height="5" fill="#6e6e6e"/><rect x="68.77" y="4.4" width="1" height="5" fill="#6e6e6e"/><rect x="75.70" y="4.4" width="1" height="5" fill="#6e6e6e"/><rect x="82.62" y="4.4" width="1" height="5" fill="#6e6e6e"/><rect x="89.55" y="4.4" width="1" height="5" fill="#6e6e6e"/><rect x="96.48" y="4.4" width="1" height="5" fill="#6e6e6e"/><rect x="103.30" y="0" width="1.2" height="9.4" fill="#8a8a8a"/><rect x="110.33" y="4.4" width="1" height="5" fill="#6e6e6e"/><rect x="117.26" y="4.4" width="1" height="5" fill="#6e6e6e"/><rect x="124.19" y="4.4" width="1" height="5" fill="#6e6e6e"/><rect x="131.11" y="4.4" width="1" height="5" fill="#6e6e6e"/><rect x="138.04" y="4.4" width="1" height="5" fill="#6e6e6e"/><rect x="144.97" y="4.4" width="1" height="5" fill="#6e6e6e"/><rect x="151.89" y="4.4" width="1" height="5" fill="#6e6e6e"/><rect x="158.82" y="4.4" width="1" height="5" fill="#6e6e6e"/><rect x="165.75" y="4.4" width="1" height="5" fill="#6e6e6e"/><rect x="172.67" y="4.4" width="1" height="5" fill="#6e6e6e"/><rect x="179.60" y="4.4" width="1" height="5" fill="#6e6e6e"/><rect x="186.53" y="4.4" width="1" height="5" fill="#6e6e6e"/><rect x="193.46" y="4.4" width="1" height="5" fill="#6e6e6e"/><rect x="200.38" y="4.4" width="1" height="5" fill="#6e6e6e"/><rect x="207.21" y="0" width="1.2" height="9.4" fill="#8a8a8a"/><rect x="214.24" y="4.4" width="1" height="5" fill="#6e6e6e"/><rect x="221.16" y="4.4" width="1" height="5" fill="#6e6e6e"/><rect x="228.09" y="4.4" width="1" height="5" fill="#6e6e6e"/><rect x="235.02" y="4.4" width="1" height="5" fill="#6e6e6e"/><rect x="241.95" y="4.4" width="1" height="5" fill="#6e6e6e"/><rect x="248.87" y="4.4" width="1" height="5" fill="#6e6e6e"/><rect x="255.80" y="4.4" width="1" height="5" fill="#6e6e6e"/><rect x="262.73" y="4.4" width="1" height="5" fill="#6e6e6e"/><rect x="269.65" y="4.4" width="1" height="5" fill="#6e6e6e"/><rect x="276.58" y="4.4" width="1" height="5" fill="#6e6e6e"/><rect x="283.51" y="4.4" width="1" height="5" fill="#6e6e6e"/><rect x="290.43" y="4.4" width="1" height="5" fill="#6e6e6e"/><rect x="297.36" y="4.4" width="1" height="5" fill="#6e6e6e"/><rect x="304.29" y="4.4" width="1" height="5" fill="#6e6e6e"/><rect x="311.12" y="0" width="1.2" height="9.4" fill="#8a8a8a"/><rect x="318.14" y="4.4" width="1" height="5" fill="#6e6e6e"/><rect x="325.07" y="4.4" width="1" height="5" fill="#6e6e6e"/><rect x="332.00" y="4.4" width="1" height="5" fill="#6e6e6e"/><rect x="338.92" y="4.4" width="1" height="5" fill="#6e6e6e"/><rect x="345.85" y="4.4" width="1" height="5" fill="#6e6e6e"/><rect x="352.78" y="4.4" width="1" height="5" fill="#6e6e6e"/><rect x="359.70" y="4.4" width="1" height="5" fill="#6e6e6e"/><rect x="366.63" y="4.4" width="1" height="5" fill="#6e6e6e"/><rect x="373.56" y="4.4" width="1" height="5" fill="#6e6e6e"/><rect x="380.49" y="4.4" width="1" height="5" fill="#6e6e6e"/></svg>
<svg style="left:1026.60px;top:532.20px;" width="10.6" height="11" viewBox="0 0 10.6 11"><path d="M0.6 0 H10 V6.2 L7.6 10.6 L5.3 7 L3 10.6 L0.6 6.2 Z" fill="#3f8ff0"/></svg>
<div style="left:673.90px;top:558.00px;width:372.90px;height:11.20px;background:#4b4b4b;"></div>
<div style="left:668.30px;top:558.00px;width:11.20px;height:11.20px;border-radius:50%;background:#1a1a1a;border:2.1px solid #e6e6e6;box-sizing:border-box;"></div>
<div style="left:1041.20px;top:558.00px;width:11.20px;height:11.20px;border-radius:50%;background:#1a1a1a;border:2.1px solid #e6e6e6;box-sizing:border-box;"></div>
<svg style="left:672.60px;top:578.50px;" width="13.4" height="13.4" viewBox="0 0 13.4 13.4"><rect x="1.5" y="1.5" width="10.4" height="10.4" fill="none" stroke="#d2d2d2" stroke-width="1"/><circle cx="1.5" cy="1.5" r="1.25" fill="#d2d2d2"/><circle cx="1.5" cy="6.7" r="1.25" fill="#d2d2d2"/><circle cx="1.5" cy="11.9" r="1.25" fill="#d2d2d2"/><circle cx="6.7" cy="1.5" r="1.25" fill="#d2d2d2"/><circle cx="6.7" cy="11.9" r="1.25" fill="#d2d2d2"/><circle cx="11.9" cy="1.5" r="1.25" fill="#d2d2d2"/><circle cx="11.9" cy="6.7" r="1.25" fill="#d2d2d2"/><circle cx="11.9" cy="11.9" r="1.25" fill="#d2d2d2"/></svg>
<svg style="left:696.50px;top:582.62px;" width="9.399999999999977" height="6.1699999999999875" viewBox="0 0 9.399999999999977 6.1699999999999875"><path d="M0.6 0.6 L4.70 5.17 L8.80 0.6" fill="none" stroke="#d2d2d2" stroke-width="1.4"/></svg>
<span class="t" style="left:728.30px;top:579.54px;font-size:12.5px;line-height:12.5px;color:#d2d2d2;transform:scaleX(1.0297);">{</span>
<span class="t" style="left:754.80px;top:579.54px;font-size:12.5px;line-height:12.5px;color:#d2d2d2;transform:scaleX(1.0297);">}</span>
<svg style="left:796.00px;top:579.70px;" width="14" height="11" viewBox="0 0 14 11"><path d="M3.2 0.4 C1.9 0.4 2.3 2.2 2.2 3.4 C2.2 4.6 1.4 5.5 0.6 5.5 C1.4 5.5 2.2 6.4 2.2 7.6 C2.3 8.8 1.9 10.6 3.2 10.6" fill="none" stroke="#d2d2d2" stroke-width="1.2"/><path d="M13.4 5.5 H7" stroke="#d2d2d2" stroke-width="1.6"/><path d="M4.6 5.5 L8.6 2.2 V8.8 Z" fill="#d2d2d2"/></svg>
<svg style="left:825.40px;top:580.20px;" width="12.4" height="10" viewBox="0 0 12.4 10"><path d="M0.3 5 L7.8 0.6 V9.4 Z" fill="#d2d2d2"/><rect x="9.6" y="0.6" width="1.8" height="8.8" fill="#d2d2d2"/></svg>
<svg style="left:854.30px;top:580.00px;" width="10" height="10.4" viewBox="0 0 10 10.4"><path d="M0.6 0.3 L9.4 5.2 L0.6 10.1 Z" fill="#d2d2d2"/></svg>
<svg style="left:881.50px;top:580.20px;" width="12.4" height="10" viewBox="0 0 12.4 10"><rect x="1" y="0.6" width="1.8" height="8.8" fill="#d2d2d2"/><path d="M12.1 5 L4.6 0.6 V9.4 Z" fill="#d2d2d2"/></svg>
<svg style="left:911.00px;top:579.70px;" width="14" height="11" viewBox="0 0 14 11"><path d="M10.8 0.4 C12.1 0.4 11.7 2.2 11.8 3.4 C11.8 4.6 12.6 5.5 13.4 5.5 C12.6 5.5 11.8 6.4 11.8 7.6 C11.7 8.8 12.1 10.6 10.8 10.6" fill="none" stroke="#d2d2d2" stroke-width="1.2"/><path d="M0.6 5.5 H7" stroke="#d2d2d2" stroke-width="1.6"/><path d="M9.4 5.5 L5.4 2.2 V8.8 Z" fill="#d2d2d2"/></svg>
<svg style="left:952.00px;top:579.20px;" width="18.4" height="12" viewBox="0 0 18.4 12"><rect x="0.4" y="6.6" width="6.2" height="5" fill="#d2d2d2"/><rect x="11.8" y="6.6" width="6.2" height="5" fill="#d2d2d2"/><path d="M4.6 6.2 V1 H13.8 V6.2" fill="none" stroke="#d2d2d2" stroke-width="1.3"/><path d="M9.2 3 L11.8 6 H6.6 Z" fill="#d2d2d2"/><rect x="6.6" y="8.4" width="5.2" height="1.4" fill="#d2d2d2"/></svg>
<svg style="left:980.40px;top:579.20px;" width="19" height="12" viewBox="0 0 19 12"><rect x="0.4" y="6.6" width="6.2" height="5" fill="none" stroke="#d2d2d2" stroke-width="1.1"/><rect x="12.4" y="6.6" width="6.2" height="5" fill="none" stroke="#d2d2d2" stroke-width="1.1"/><path d="M4.8 6.2 V1 H14.2 V6.2" fill="none" stroke="#d2d2d2" stroke-width="1.3"/><path d="M9.5 3 L12.1 6 H6.9 Z" fill="#d2d2d2"/><path d="M2 9 l2.4 -1.6 v3.2 z M17 9 l-2.4 -1.6 v3.2 z" fill="#d2d2d2"/></svg>
<svg style="left:1012.40px;top:581.20px;" width="10" height="8" viewBox="0 0 10 8"><path d="M0.8 0.8 L4 4 L0.8 7.2 M5 0.8 L8.2 4 L5 7.2" fill="none" stroke="#d2d2d2" stroke-width="1.3"/></svg>
<svg style="left:1030.00px;top:580.20px;" width="10" height="10" viewBox="0 0 10 10"><path d="M5 0.2 V9.8 M0.2 5 H9.8" stroke="#d2d2d2" stroke-width="2.4"/></svg>
<span class="t" style="left:62.40px;top:617.48px;font-size:11px;line-height:11px;color:#ececec;transform:scaleX(0.8539);">Bin: TEST_COLOR_MANAGEMENT</span>
<div style="left:225.70px;top:619.10px;width:7.30px;height:1.10px;background:#c8c8c8;"></div>
<div style="left:225.70px;top:622.10px;width:7.30px;height:1.10px;background:#c8c8c8;"></div>
<div style="left:225.70px;top:625.10px;width:7.30px;height:1.10px;background:#c8c8c8;"></div>
<div style="left:62.40px;top:630.80px;width:170.60px;height:1.80px;background:#d8d8d8;"></div>
<span class="t" style="left:253.80px;top:617.48px;font-size:11px;line-height:11px;color:#cfcfcf;transform:scaleX(0.7495);">P</span>
<div style="left:260.00px;top:616.00px;width:0.90px;height:13.00px;background:#555;"></div>
<svg style="left:266.50px;top:618.60px;" width="10" height="8" viewBox="0 0 10 8"><path d="M0.8 0.8 L4 4 L0.8 7.2 M5 0.8 L8.2 4 L5 7.2" fill="none" stroke="#d0d0d0" stroke-width="1.3"/></svg>
<svg style="left:70.50px;top:641.60px;" width="15" height="10.6" viewBox="0 0 15 10.6"><path d="M0.3 0.3 H5 L6.2 1.8 H14.7 V10.3 H0.3 Z" fill="#c4c4c4"/><path d="M4.4 4.2 L2.2 6.4 H3.7 V8.2 H9.6 V7 H5.1 V6.4 H6.6 Z" fill="#1d1d1d"/></svg>
<span class="t" style="left:94.00px;top:642.28px;font-size:11px;line-height:11px;color:#cfcfcf;transform:scaleX(0.8695);">gestion..T_COLOR_MANAGEMENT</span>
<div style="left:67.50px;top:664.80px;width:175.10px;height:21.70px;background:#0f0f0f;border:1px solid #2c2c2c;border-radius:4px;box-sizing:border-box;"></div>
<svg style="left:74.60px;top:669.90px;" width="13" height="12.6" viewBox="0 0 13 12.6"><circle cx="5" cy="5" r="4" fill="none" stroke="#d6d6d6" stroke-width="1.3"/><path d="M8 8 L12 12" stroke="#d6d6d6" stroke-width="1.5" stroke-linecap="round"/></svg>
<svg style="left:254.30px;top:669.90px;" width="14.4" height="11" viewBox="0 0 14.4 11"><path d="M0.3 0.3 H4.8 L6 1.8 H14.1 V10.7 H0.3 Z" fill="#c4c4c4"/><circle cx="7.8" cy="5.6" r="2.1" fill="none" stroke="#1d1d1d" stroke-width="1.1"/><path d="M6.2 7.2 L4.6 8.8" stroke="#1d1d1d" stroke-width="1.2"/></svg>
<span class="t" style="left:96.40px;top:701.38px;font-size:11px;line-height:11px;color:#cfcfcf;transform:scaleX(0.8895);">Name</span>
<div style="left:67.50px;top:716.00px;width:198.00px;height:238.80px;border:1px solid #2b2b2b;border-radius:4px;box-sizing:border-box;"></div>
<div style="left:68.50px;top:717.60px;width:166.70px;height:20.58px;background:#2c2c2c;"></div>
<div style="left:74.60px;top:722.20px;width:11.20px;height:11.20px;background:#0b5878;border-radius:2.5px;border:1px solid #1b6a8c;box-sizing:border-box;"></div>
<svg style="left:136.70px;top:720.90px;" width="15" height="14" viewBox="0 0 15 14"><rect x="0.2" y="0" width="10" height="9.6" rx="0.6" fill="#a88cf0"/><rect x="2.6" y="0.9" width="6.8" height="3.6" fill="#c6b4f7"/><rect x="1.8" y="4.6" width="13" height="9.6" rx="1.6" fill="#2b2b2b"/><rect x="2.3" y="5.1" width="12" height="8.6" rx="1.5" fill="#2fd092"/><rect x="3.9" y="6.8" width="8.8" height="5.2" fill="#14241c"/><path d="M3.9 9.4 H12.7" stroke="#3ad69a" stroke-width="0.9"/><path d="M4.7 7.9 L7.0 9.4 L4.7 10.9 Z" fill="#3ad69a"/><path d="M7.3 7.9 L9.6 9.4 L7.3 10.9 Z" fill="#3ad69a"/><path d="M9.9 7.9 L12.2 9.4 L9.9 10.9 Z" fill="#3ad69a"/></svg>
<div style="left:159.8px;top:717.60px;width:75.4px;height:20.58px;overflow:hidden;">
<span class="t" style="left:0.00px;top:5.72px;font-size:10.5px;line-height:10.5px;color:#d8d8d8;transform:scaleX(0.9040);">FX30_SLog3_24fps_1.mp4</span>
</div>
<div style="left:68.50px;top:739.38px;width:166.70px;height:20.58px;background:#2c2c2c;"></div>
<div style="left:74.60px;top:743.98px;width:11.20px;height:11.20px;background:#0b5878;border-radius:2.5px;border:1px solid #1b6a8c;box-sizing:border-box;"></div>
<svg style="left:136.70px;top:742.68px;" width="15" height="14" viewBox="0 0 15 14"><rect x="0.2" y="0" width="10" height="9.6" rx="0.6" fill="#a88cf0"/><rect x="2.6" y="0.9" width="6.8" height="3.6" fill="#c6b4f7"/><rect x="1.8" y="4.6" width="13" height="9.6" rx="1.6" fill="#2b2b2b"/><rect x="2.3" y="5.1" width="12" height="8.6" rx="1.5" fill="#2fd092"/><rect x="3.9" y="6.8" width="8.8" height="5.2" fill="#14241c"/><path d="M3.9 9.4 H12.7" stroke="#3ad69a" stroke-width="0.9"/><path d="M4.7 7.9 L7.0 9.4 L4.7 10.9 Z" fill="#3ad69a"/><path d="M7.3 7.9 L9.6 9.4 L7.3 10.9 Z" fill="#3ad69a"/><path d="M9.9 7.9 L12.2 9.4 L9.9 10.9 Z" fill="#3ad69a"/></svg>
<div style="left:159.8px;top:739.38px;width:75.4px;height:20.58px;overflow:hidden;">
<span class="t" style="left:0.00px;top:5.72px;font-size:10.5px;line-height:10.5px;color:#d8d8d8;transform:scaleX(0.9040);">FX30_SLog3_24fps_2.mp4</span>
</div>
<div style="left:68.50px;top:761.16px;width:166.70px;height:20.58px;background:#2c2c2c;"></div>
<div style="left:74.60px;top:765.76px;width:11.20px;height:11.20px;background:#0b5878;border-radius:2.5px;border:1px solid #1b6a8c;box-sizing:border-box;"></div>
<svg style="left:136.70px;top:764.46px;" width="15" height="14" viewBox="0 0 15 14"><rect x="0.2" y="0" width="10" height="9.6" rx="0.6" fill="#a88cf0"/><rect x="2.6" y="0.9" width="6.8" height="3.6" fill="#c6b4f7"/><rect x="1.8" y="4.6" width="13" height="9.6" rx="1.6" fill="#2b2b2b"/><rect x="2.3" y="5.1" width="12" height="8.6" rx="1.5" fill="#2fd092"/><rect x="3.9" y="6.8" width="8.8" height="5.2" fill="#14241c"/><path d="M3.9 9.4 H12.7" stroke="#3ad69a" stroke-width="0.9"/><path d="M4.7 7.9 L7.0 9.4 L4.7 10.9 Z" fill="#3ad69a"/><path d="M7.3 7.9 L9.6 9.4 L7.3 10.9 Z" fill="#3ad69a"/><path d="M9.9 7.9 L12.2 9.4 L9.9 10.9 Z" fill="#3ad69a"/></svg>
<div style="left:159.8px;top:761.16px;width:75.4px;height:20.58px;overflow:hidden;">
<span class="t" style="left:0.00px;top:5.72px;font-size:10.5px;line-height:10.5px;color:#d8d8d8;transform:scaleX(0.9040);">FX30_SLog3_24fps_3.mp4</span>
</div>
<div style="left:68.50px;top:782.94px;width:166.70px;height:20.58px;background:#2c2c2c;"></div>
<div style="left:74.60px;top:787.54px;width:11.20px;height:11.20px;background:#0b5878;border-radius:2.5px;border:1px solid #1b6a8c;box-sizing:border-box;"></div>
<svg style="left:136.70px;top:786.24px;" width="15" height="14" viewBox="0 0 15 14"><rect x="0.2" y="0" width="10" height="9.6" rx="0.6" fill="#a88cf0"/><rect x="2.6" y="0.9" width="6.8" height="3.6" fill="#c6b4f7"/><rect x="1.8" y="4.6" width="13" height="9.6" rx="1.6" fill="#2b2b2b"/><rect x="2.3" y="5.1" width="12" height="8.6" rx="1.5" fill="#2fd092"/><rect x="3.9" y="6.8" width="8.8" height="5.2" fill="#14241c"/><path d="M3.9 9.4 H12.7" stroke="#3ad69a" stroke-width="0.9"/><path d="M4.7 7.9 L7.0 9.4 L4.7 10.9 Z" fill="#3ad69a"/><path d="M7.3 7.9 L9.6 9.4 L7.3 10.9 Z" fill="#3ad69a"/><path d="M9.9 7.9 L12.2 9.4 L9.9 10.9 Z" fill="#3ad69a"/></svg>
<div style="left:159.8px;top:782.94px;width:75.4px;height:20.58px;overflow:hidden;">
<span class="t" style="left:0.00px;top:5.72px;font-size:10.5px;line-height:10.5px;color:#d8d8d8;transform:scaleX(0.9040);">FX30_SLog3_120fps_1.mp4</span>
</div>
<div style="left:68.50px;top:804.72px;width:166.70px;height:20.58px;background:#2c2c2c;"></div>
<div style="left:74.60px;top:809.32px;width:11.20px;height:11.20px;background:#0b5878;border-radius:2.5px;border:1px solid #1b6a8c;box-sizing:border-box;"></div>
<svg style="left:136.70px;top:808.02px;" width="15" height="14" viewBox="0 0 15 14"><rect x="0.2" y="0" width="10" height="9.6" rx="0.6" fill="#a88cf0"/><rect x="2.6" y="0.9" width="6.8" height="3.6" fill="#c6b4f7"/><rect x="1.8" y="4.6" width="13" height="9.6" rx="1.6" fill="#2b2b2b"/><rect x="2.3" y="5.1" width="12" height="8.6" rx="1.5" fill="#2fd092"/><rect x="3.9" y="6.8" width="8.8" height="5.2" fill="#14241c"/><path d="M3.9 9.4 H12.7" stroke="#3ad69a" stroke-width="0.9"/><path d="M4.7 7.9 L7.0 9.4 L4.7 10.9 Z" fill="#3ad69a"/><path d="M7.3 7.9 L9.6 9.4 L7.3 10.9 Z" fill="#3ad69a"/><path d="M9.9 7.9 L12.2 9.4 L9.9 10.9 Z" fill="#3ad69a"/></svg>
<div style="left:159.8px;top:804.72px;width:75.4px;height:20.58px;overflow:hidden;">
<span class="t" style="left:0.00px;top:5.72px;font-size:10.5px;line-height:10.5px;color:#d8d8d8;transform:scaleX(0.9040);">FX30_SLog3_60fps_1.mp4</span>
</div>
<div style="left:68.50px;top:826.50px;width:166.70px;height:20.58px;background:#2c2c2c;"></div>
<div style="left:74.60px;top:831.10px;width:11.20px;height:11.20px;background:#0b5878;border-radius:2.5px;border:1px solid #1b6a8c;box-sizing:border-box;"></div>
<svg style="left:136.70px;top:829.80px;" width="15" height="14" viewBox="0 0 15 14"><rect x="0.2" y="0" width="10" height="9.6" rx="0.6" fill="#a88cf0"/><rect x="2.6" y="0.9" width="6.8" height="3.6" fill="#c6b4f7"/><rect x="1.8" y="4.6" width="13" height="9.6" rx="1.6" fill="#2b2b2b"/><rect x="2.3" y="5.1" width="12" height="8.6" rx="1.5" fill="#2fd092"/><rect x="3.9" y="6.8" width="8.8" height="5.2" fill="#14241c"/><path d="M3.9 9.4 H12.7" stroke="#3ad69a" stroke-width="0.9"/><path d="M4.7 7.9 L7.0 9.4 L4.7 10.9 Z" fill="#3ad69a"/><path d="M7.3 7.9 L9.6 9.4 L7.3 10.9 Z" fill="#3ad69a"/><path d="M9.9 7.9 L12.2 9.4 L9.9 10.9 Z" fill="#3ad69a"/></svg>
<div style="left:159.8px;top:826.50px;width:75.4px;height:20.58px;overflow:hidden;">
<span class="t" style="left:0.00px;top:5.72px;font-size:10.5px;line-height:10.5px;color:#d8d8d8;transform:scaleX(0.9040);">FX30_SLog3_60fps_2.mp4</span>
</div>
<div style="left:68.50px;top:848.28px;width:166.70px;height:20.58px;background:#2c2c2c;"></div>
<div style="left:74.60px;top:852.88px;width:11.20px;height:11.20px;background:#0b5878;border-radius:2.5px;border:1px solid #1b6a8c;box-sizing:border-box;"></div>
<svg style="left:136.70px;top:851.58px;" width="15" height="14" viewBox="0 0 15 14"><rect x="0.2" y="0" width="10" height="9.6" rx="0.6" fill="#a88cf0"/><rect x="2.6" y="0.9" width="6.8" height="3.6" fill="#c6b4f7"/><rect x="1.8" y="4.6" width="13" height="9.6" rx="1.6" fill="#2b2b2b"/><rect x="2.3" y="5.1" width="12" height="8.6" rx="1.5" fill="#2fd092"/><rect x="3.9" y="6.8" width="8.8" height="5.2" fill="#14241c"/><path d="M3.9 9.4 H12.7" stroke="#3ad69a" stroke-width="0.9"/><path d="M4.7 7.9 L7.0 9.4 L4.7 10.9 Z" fill="#3ad69a"/><path d="M7.3 7.9 L9.6 9.4 L7.3 10.9 Z" fill="#3ad69a"/><path d="M9.9 7.9 L12.2 9.4 L9.9 10.9 Z" fill="#3ad69a"/></svg>
<div style="left:159.8px;top:848.28px;width:75.4px;height:20.58px;overflow:hidden;">
<span class="t" style="left:0.00px;top:5.72px;font-size:10.5px;line-height:10.5px;color:#d8d8d8;transform:scaleX(0.9040);">FX30_SLog3_60fps_3.mp4</span>
</div>
<div style="left:68.50px;top:870.06px;width:166.70px;height:20.58px;background:#2c2c2c;"></div>
<div style="left:74.60px;top:874.66px;width:11.20px;height:11.20px;background:#0b5878;border-radius:2.5px;border:1px solid #1b6a8c;box-sizing:border-box;"></div>
<svg style="left:136.70px;top:873.36px;" width="15" height="14" viewBox="0 0 15 14"><rect x="0.2" y="0" width="10" height="9.6" rx="0.6" fill="#a88cf0"/><rect x="2.6" y="0.9" width="6.8" height="3.6" fill="#c6b4f7"/><rect x="1.8" y="4.6" width="13" height="9.6" rx="1.6" fill="#2b2b2b"/><rect x="2.3" y="5.1" width="12" height="8.6" rx="1.5" fill="#2fd092"/><rect x="3.9" y="6.8" width="8.8" height="5.2" fill="#14241c"/><path d="M3.9 9.4 H12.7" stroke="#3ad69a" stroke-width="0.9"/><path d="M4.7 7.9 L7.0 9.4 L4.7 10.9 Z" fill="#3ad69a"/><path d="M7.3 7.9 L9.6 9.4 L7.3 10.9 Z" fill="#3ad69a"/><path d="M9.9 7.9 L12.2 9.4 L9.9 10.9 Z" fill="#3ad69a"/></svg>
<div style="left:159.8px;top:870.06px;width:75.4px;height:20.58px;overflow:hidden;">
<span class="t" style="left:0.00px;top:5.72px;font-size:10.5px;line-height:10.5px;color:#d8d8d8;transform:scaleX(0.9040);">FX30_SLog3_60fps_4.mp4</span>
</div>
<div style="left:68.50px;top:912.42px;width:166.70px;height:1.00px;background:#262626;"></div>
<div style="left:74.60px;top:896.44px;width:11.20px;height:11.20px;background:#b85a16;border-radius:2.5px;border:1px solid #c8691f;box-sizing:border-box;"></div>
<svg style="left:101.00px;top:897.84px;" width="6" height="10" viewBox="0 0 6 10"><path d="M0.8 0.8 L5 5 L0.8 9.2" fill="none" stroke="#d6d6d6" stroke-width="1.4"/></svg>
<svg style="left:118.40px;top:896.84px;" width="13.4" height="11" viewBox="0 0 13.4 11"><path d="M0.3 0.3 H4.6 L5.8 1.8 H13.1 V10.7 H0.3 Z" fill="#c4c4c4"/></svg>
<span class="t" style="left:140.40px;top:897.72px;font-size:11px;line-height:11px;color:#d8d8d8;transform:scaleX(0.8680);">Rush Alexa</span>
<div style="left:68.50px;top:934.20px;width:166.70px;height:1.00px;background:#262626;"></div>
<div style="left:74.60px;top:918.22px;width:11.20px;height:11.20px;background:#0b5878;border-radius:2.5px;border:1px solid #1b6a8c;box-sizing:border-box;"></div>
<svg style="left:118.00px;top:916.92px;" width="15" height="14" viewBox="0 0 15 14"><rect x="0.2" y="0" width="10" height="9.6" rx="0.6" fill="#a88cf0"/><rect x="2.6" y="0.9" width="6.8" height="3.6" fill="#c6b4f7"/><rect x="1.8" y="4.6" width="13" height="9.6" rx="1.6" fill="#2b2b2b"/><rect x="2.3" y="5.1" width="12" height="8.6" rx="1.5" fill="#2fd092"/><rect x="3.9" y="6.8" width="8.8" height="5.2" fill="#14241c"/><path d="M3.9 9.4 H12.7" stroke="#3ad69a" stroke-width="0.9"/><path d="M4.7 7.9 L7.0 9.4 L4.7 10.9 Z" fill="#3ad69a"/><path d="M7.3 7.9 L9.6 9.4 L7.3 10.9 Z" fill="#3ad69a"/><path d="M9.9 7.9 L12.2 9.4 L9.9 10.9 Z" fill="#3ad69a"/></svg>
<div style="left:140.4px;top:913.62px;width:94.8px;height:20.58px;overflow:hidden;">
<span class="t" style="left:0.00px;top:5.72px;font-size:10.5px;line-height:10.5px;color:#d8d8d8;transform:scaleX(0.9200);">A001_07090853_C010.mxf</span>
</div>
<div style="left:253.90px;top:754.80px;width:7.10px;height:169.80px;background:#4a4a4a;border-radius:3.6px;"></div>
<div style="left:71.60px;top:944.20px;width:15.60px;height:6.90px;background:#4a4a4a;border-radius:3.5px;"></div>
<svg style="left:71.00px;top:967.10px;" width="14" height="14" viewBox="0 0 14 14"><path d="M1 13 L2.2 8.6 L9.8 1 C10.6 0.2 11.8 0.2 12.6 1 L13 1.4 C13.8 2.2 13.8 3.4 13 4.2 L5.4 11.8 Z" fill="#3fd39a"/></svg>
<div style="left:96.00px;top:963.00px;width:22.00px;height:21.80px;background:#4a4a4a;border-radius:4px;"></div>
<svg style="left:100.00px;top:969.10px;" width="14" height="10" viewBox="0 0 14 10"><rect x="0" y="0.4" width="3.6" height="3.4" fill="#e0e0e0"/><rect x="0" y="6" width="3.6" height="3.4" fill="#e0e0e0"/><rect x="5.4" y="1.3" width="8.4" height="1.5" fill="#e0e0e0"/><rect x="5.4" y="6.9" width="8.4" height="1.5" fill="#e0e0e0"/></svg>
<svg style="left:130.60px;top:968.50px;" width="11" height="11" viewBox="0 0 11 11"><rect x="0.8" y="0.6" width="9.2" height="6.8" fill="#c8c8c8"/><rect x="0.4" y="9" width="10" height="1.6" fill="#c8c8c8"/></svg>
<svg style="left:156.50px;top:968.50px;" width="17.6" height="11" viewBox="0 0 17.6 11"><rect x="0.4" y="0.4" width="8" height="5.6" fill="#c8c8c8" stroke="#1d1d1d" stroke-width="0.6"/><rect x="4.4" y="2.6" width="8" height="5.6" fill="#c8c8c8" stroke="#1d1d1d" stroke-width="0.8"/><rect x="8.6" y="4.8" width="8.4" height="5.8" fill="#c8c8c8" stroke="#1d1d1d" stroke-width="0.8"/></svg>
<div style="left:189.20px;top:969.50px;width:9.20px;height:9.20px;border-radius:50%;border:2px solid #e0e0e0;box-sizing:border-box;background:#1d1d1d;"></div>
<div style="left:203.00px;top:973.50px;width:54.50px;height:1.20px;background:#555;"></div>
<div style="left:275.20px;top:970.80px;width:6.10px;height:1.10px;background:#9a9a9a;"></div>
<div style="left:275.20px;top:973.80px;width:6.10px;height:1.10px;background:#9a9a9a;"></div>
<div style="left:275.20px;top:976.80px;width:6.10px;height:1.10px;background:#9a9a9a;"></div>
<div style="left:295.60px;top:625.50px;width:22.40px;height:22.40px;background:#1f6fe6;border-radius:4.5px;"></div>
<svg style="left:301.20px;top:629.40px;" width="13.4" height="15.8" viewBox="0 0 13.4 15.8"><path d="M0.7 0.4 L12.6 10.3 L5.9 10.9 L1.7 15.4 Z" fill="#fff"/></svg>
<svg style="left:298.50px;top:658.50px;" width="19" height="15" viewBox="0 0 19 15"><rect x="0.8" y="1.2" width="9" height="9" fill="none" stroke="#d2d2d2" stroke-width="1.2" stroke-dasharray="2 1.4"/><path d="M6 5.7 H11.5" stroke="#d2d2d2" stroke-width="1.8"/><path d="M11 2.4 L15.4 5.7 L11 9 Z" fill="#d2d2d2"/><path d="M18.4 14.6 l-3 0 l3 -3 z" fill="#d2d2d2"/></svg>
<svg style="left:298.00px;top:686.60px;" width="19" height="15" viewBox="0 0 19 15"><rect x="8" y="0.6" width="1.6" height="12.4" fill="#d2d2d2"/><path d="M0.4 6.8 L5.4 3.2 V5.8 H7 V7.8 H5.4 V10.4 Z" fill="#d2d2d2"/><path d="M17.2 6.8 L12.2 3.2 V5.8 H10.6 V7.8 H12.2 V10.4 Z" fill="#d2d2d2"/><path d="M18.8 14.8 l-3 0 l3 -3 z" fill="#d2d2d2"/></svg>
<svg style="left:299.20px;top:716.20px;" width="15" height="15" viewBox="0 0 15 15"><g transform="rotate(40 7.5 7.5)"><rect x="0.6" y="3.4" width="13.8" height="8.2" rx="1" fill="#d2d2d2"/><rect x="4.4" y="6.6" width="6.2" height="1.8" rx="0.9" fill="#1d1d1d"/></g></svg>
<svg style="left:297.60px;top:745.00px;" width="19" height="15" viewBox="0 0 19 15"><rect x="0.6" y="0.4" width="1.5" height="14" fill="#d2d2d2"/><rect x="16.6" y="0.4" width="1.5" height="14" fill="#d2d2d2"/><path d="M5.6 7.4 H13" stroke="#d2d2d2" stroke-width="1.5"/><path d="M3.4 7.4 L6.6 4.6 V10.2 Z M15.4 7.4 L12.2 4.6 V10.2 Z" fill="#d2d2d2"/><path d="M18.8 15 l-3 0 l3 -3 z" fill="#d2d2d2"/></svg>
<svg style="left:299.00px;top:773.40px;" width="16" height="16" viewBox="0 0 16 16"><g transform="rotate(225 8 8)"><path d="M8 0 L11 6.4 L10 11.4 H6 L5 6.4 Z" fill="#d2d2d2"/><rect x="5.6" y="12.4" width="4.8" height="2.6" fill="#d2d2d2"/><circle cx="8" cy="6.6" r="1.1" fill="#1d1d1d"/><path d="M8 0.4 V5.4" stroke="#1d1d1d" stroke-width="0.8"/></g></svg>
<svg style="left:298.60px;top:803.60px;" width="18" height="16" viewBox="0 0 18 16"><rect x="0.8" y="0.8" width="13.6" height="12.4" fill="#3a3a3a" stroke="#d2d2d2" stroke-width="1.4"/><path d="M17.4 15.4 l-3 0 l3 -3 z" fill="#d2d2d2"/></svg>
<svg style="left:298.60px;top:831.80px;" width="18" height="17" viewBox="0 0 18 17"><g fill="none" stroke="#d2d2d2" stroke-width="2.1" stroke-linecap="round"><path d="M5.4 7.6 L4.2 2.6"/><path d="M7.6 6.8 L7.4 1.3"/><path d="M9.8 7 L10.6 1.9"/><path d="M11.8 8 L13.4 3.9"/><path d="M4.6 10.6 L1.4 7.2"/></g><path d="M4.2 6.8 H12.6 L12.4 10 C12.2 12.6 10.6 14.4 8.4 14.4 C6.2 14.4 5.2 13 3.8 10.6 L2.6 8.4 Z" fill="#d2d2d2"/><path d="M17.8 15.6 l-3 0 l3 -3 z" fill="#d2d2d2"/></svg>
<span class="t" style="left:300px;top:858.2px;font-size:18.6px;line-height:18.6px;color:#d2d2d2;font-family:'Liberation Serif',serif;transform:scaleX(1.11);-webkit-text-stroke:0.3px #d2d2d2;">T</span>
<svg style="left:299.00px;top:860.80px;" width="18" height="17" viewBox="0 0 18 17"><path d="M17.4 15.8 l-3 0 l3 -3 z" fill="#d2d2d2"/></svg>
<div style="left:296.00px;top:887.20px;width:21.40px;height:21.20px;border:1.2px solid #6a47c8;border-radius:4.5px;box-sizing:border-box;"></div>
<svg style="left:299.40px;top:890.60px;" width="15" height="15" viewBox="0 0 15 15"><path d="M7 1 V14" stroke="#d2d2d2" stroke-width="1.3"/><path d="M0.6 3.8 L3.8 1.6 V6 Z M4 3 h3 v1.6 h-3z" fill="#d2d2d2"/><path d="M13.2 10.8 L10 8.6 V13 Z M9.8 10 h-2.8 v1.6 h2.8z" fill="#d2d2d2"/><path d="M11.4 0.4 l0.8 1.9 l1.9 0.8 l-1.9 0.8 l-0.8 1.9 l-0.8 -1.9 l-1.9 -0.8 l1.9 -0.8 z" fill="#d2d2d2"/><path d="M12.6 5.6 l0.5 1.1 l1.1 0.5 l-1.1 0.5 l-0.5 1.1 l-0.5 -1.1 l-1.1 -0.5 l1.1 -0.5 z" fill="#d2d2d2"/></svg>
<svg style="left:344.40px;top:620.60px;" width="4.8" height="4.8" viewBox="0 0 4.8 4.8"><path d="M0.4 0.4 L4.4 4.4 M4.4 0.4 L0.4 4.4" stroke="#b8b8b8" stroke-width="0.9"/></svg>
<div style="left:357.00px;top:616.60px;width:9.60px;height:9.60px;background:#4b5512;"></div>
<span class="t" style="left:376.10px;top:617.58px;font-size:11px;line-height:11px;color:#ececec;transform:scaleX(0.8708);">A003C004_140418_R2JV</span>
<div style="left:497.00px;top:619.10px;width:7.50px;height:1.10px;background:#c8c8c8;"></div>
<div style="left:497.00px;top:622.10px;width:7.50px;height:1.10px;background:#c8c8c8;"></div>
<div style="left:497.00px;top:625.10px;width:7.50px;height:1.10px;background:#c8c8c8;"></div>
<span class="t" style="left:350.40px;top:639.76px;font-size:13.5px;line-height:13.5px;color:#4a9df8;transform:scaleX(0.9732);-webkit-text-stroke:0.55px currentColor;">00:01:51:17</span>
<div style="left:345.50px;top:658.80px;width:22.20px;height:21.00px;background:#484848;border-radius:4px;"></div>
<div style="left:374.30px;top:658.80px;width:22.20px;height:21.00px;background:#484848;border-radius:4px;"></div>
<div style="left:403.20px;top:658.80px;width:22.60px;height:21.00px;background:#484848;border-radius:4px;"></div>
<svg style="left:350.00px;top:663.30px;" width="13" height="12" viewBox="0 0 13 12"><path d="M6.5 0.4 V11.6" stroke="#cdcdcd" stroke-width="1.3"/><path d="M0.6 3 H4.6 M0.6 6 H4.6 M0.6 9 H4.6 M8.4 3 H12.4 M8.4 6 H12.4 M8.4 9 H12.4" stroke="#cdcdcd" stroke-width="1.4" stroke-dasharray="2.4 1.6"/><path d="M4 4.2 L6.5 6 L4 7.8 Z M9 4.2 L6.5 6 L9 7.8 Z" fill="#cdcdcd"/></svg>
<svg style="left:380.40px;top:664.70px;" width="10" height="10" viewBox="0 0 10 10"><path d="M1.5 9.6 V4.8 C1.5 -0.4 8.5 -0.4 8.5 4.8 V9.6" fill="none" stroke="#cdcdcd" stroke-width="2.4"/><path d="M0.2 7.6 h2.6 M7.2 7.6 h2.6" stroke="#484848" stroke-width="0.8"/></svg>
<svg style="left:408.00px;top:662.90px;" width="14" height="13" viewBox="0 0 14 13"><rect x="0.6" y="1" width="4" height="4" fill="#cdcdcd"/><path d="M4.4 7 H0.8 V10.4 H4.4" fill="none" stroke="#cdcdcd" stroke-width="1.1"/><path d="M5.6 3 H9 M5.6 8.6 H7.4" stroke="#cdcdcd" stroke-width="1.2"/><path d="M5.4 0.6 L13.4 0.6 V8 Z" fill="#cdcdcd" opacity=".55"/><path d="M5.6 1 L13 7.4 L9.4 7.8 L7 11.8 Z" fill="#cdcdcd" stroke="#484848" stroke-width="0.7"/></svg>
<svg style="left:439.90px;top:664.90px;" width="7.6" height="9" viewBox="0 0 7.6 9"><path d="M0.5 0.5 H7.1 V5 L3.8 8.6 L0.5 5 Z" fill="#cdcdcd"/></svg>
<svg style="left:465.90px;top:662.80px;" width="13" height="13" viewBox="0 0 13.5 13.5"><path d="M6 6 L11.4 11.4" stroke="#cfcfcf" stroke-width="2.8" stroke-linecap="round"/><circle cx="4.6" cy="4.6" r="3.8" fill="#cfcfcf"/><path d="M3.9 3.9 L-0.5 0.3" stroke="#1d1d1d" stroke-width="3" /><circle cx="4" cy="4" r="1.5" fill="#1d1d1d"/></svg>
<div style="left:494.00px;top:664.60px;width:15.40px;height:9.40px;background:#6c6c6c;border-radius:2px;border:1px solid #8a8a8a;box-sizing:border-box;"></div>
<span class="t" style="left:496.07px;top:665.84px;font-size:8.2px;line-height:8.2px;color:#1d1d1d;font-weight:bold;transform:scaleX(0.9500);">CC</span>
<span class="t" style="left:534.40px;top:663.62px;font-size:10.5px;line-height:10.5px;color:#d4d4d4;transform:scaleX(0.9392);">00:01:36:00</span>
<span class="t" style="left:610.55px;top:663.62px;font-size:10.5px;line-height:10.5px;color:#d4d4d4;transform:scaleX(0.9392);">00:01:40:00</span>
<span class="t" style="left:686.70px;top:663.62px;font-size:10.5px;line-height:10.5px;color:#d4d4d4;transform:scaleX(0.9392);">00:01:44:00</span>
<span class="t" style="left:762.85px;top:663.62px;font-size:10.5px;line-height:10.5px;color:#d4d4d4;transform:scaleX(0.9392);">00:01:48:00</span>
<span class="t" style="left:839.00px;top:663.62px;font-size:10.5px;line-height:10.5px;color:#d4d4d4;transform:scaleX(0.9392);">00:01:52:00</span>
<div style="left:915.1px;top:660px;width:47.5px;height:16px;overflow:hidden;">
<span class="t" style="left:0.00px;top:3.62px;font-size:10.5px;line-height:10.5px;color:#d4d4d4;transform:scaleX(0.9392);">00:01:56:00</span>
</div>
<svg style="left:522.90px;top:675.40px;" width="440" height="10.4" viewBox="0 0 440 10.4"><rect x="-0.50" y="5.6" width="1" height="4.4" fill="#707070"/><rect x="4.58" y="5.6" width="1" height="4.4" fill="#707070"/><rect x="9.65" y="5.6" width="1" height="4.4" fill="#707070"/><rect x="14.73" y="5.6" width="1" height="4.4" fill="#707070"/><rect x="19.81" y="5.6" width="1" height="4.4" fill="#707070"/><rect x="24.88" y="5.6" width="1" height="4.4" fill="#707070"/><rect x="29.96" y="5.6" width="1" height="4.4" fill="#707070"/><rect x="34.99" y="0" width="1.1" height="10.2" fill="#8c8c8c"/><rect x="40.11" y="5.6" width="1" height="4.4" fill="#707070"/><rect x="45.19" y="5.6" width="1" height="4.4" fill="#707070"/><rect x="50.27" y="5.6" width="1" height="4.4" fill="#707070"/><rect x="55.34" y="5.6" width="1" height="4.4" fill="#707070"/><rect x="60.42" y="5.6" width="1" height="4.4" fill="#707070"/><rect x="65.50" y="5.6" width="1" height="4.4" fill="#707070"/><rect x="70.57" y="5.6" width="1" height="4.4" fill="#707070"/><rect x="75.65" y="5.6" width="1" height="4.4" fill="#707070"/><rect x="80.73" y="5.6" width="1" height="4.4" fill="#707070"/><rect x="85.80" y="5.6" width="1" height="4.4" fill="#707070"/><rect x="90.88" y="5.6" width="1" height="4.4" fill="#707070"/><rect x="95.96" y="5.6" width="1" height="4.4" fill="#707070"/><rect x="101.03" y="5.6" width="1" height="4.4" fill="#707070"/><rect x="106.11" y="5.6" width="1" height="4.4" fill="#707070"/><rect x="111.14" y="0" width="1.1" height="10.2" fill="#8c8c8c"/><rect x="116.26" y="5.6" width="1" height="4.4" fill="#707070"/><rect x="121.34" y="5.6" width="1" height="4.4" fill="#707070"/><rect x="126.42" y="5.6" width="1" height="4.4" fill="#707070"/><rect x="131.49" y="5.6" width="1" height="4.4" fill="#707070"/><rect x="136.57" y="5.6" width="1" height="4.4" fill="#707070"/><rect x="141.65" y="5.6" width="1" height="4.4" fill="#707070"/><rect x="146.72" y="5.6" width="1" height="4.4" fill="#707070"/><rect x="151.80" y="5.6" width="1" height="4.4" fill="#707070"/><rect x="156.88" y="5.6" width="1" height="4.4" fill="#707070"/><rect x="161.95" y="5.6" width="1" height="4.4" fill="#707070"/><rect x="167.03" y="5.6" width="1" height="4.4" fill="#707070"/><rect x="172.11" y="5.6" width="1" height="4.4" fill="#707070"/><rect x="177.18" y="5.6" width="1" height="4.4" fill="#707070"/><rect x="182.26" y="5.6" width="1" height="4.4" fill="#707070"/><rect x="187.29" y="0" width="1.1" height="10.2" fill="#8c8c8c"/><rect x="192.41" y="5.6" width="1" height="4.4" fill="#707070"/><rect x="197.49" y="5.6" width="1" height="4.4" fill="#707070"/><rect x="202.57" y="5.6" width="1" height="4.4" fill="#707070"/><rect x="207.64" y="5.6" width="1" height="4.4" fill="#707070"/><rect x="212.72" y="5.6" width="1" height="4.4" fill="#707070"/><rect x="217.80" y="5.6" width="1" height="4.4" fill="#707070"/><rect x="222.87" y="5.6" width="1" height="4.4" fill="#707070"/><rect x="227.95" y="5.6" width="1" height="4.4" fill="#707070"/><rect x="233.03" y="5.6" width="1" height="4.4" fill="#707070"/><rect x="238.10" y="5.6" width="1" height="4.4" fill="#707070"/><rect x="243.18" y="5.6" width="1" height="4.4" fill="#707070"/><rect x="248.26" y="5.6" width="1" height="4.4" fill="#707070"/><rect x="253.33" y="5.6" width="1" height="4.4" fill="#707070"/><rect x="258.41" y="5.6" width="1" height="4.4" fill="#707070"/><rect x="263.44" y="0" width="1.1" height="10.2" fill="#8c8c8c"/><rect x="268.57" y="5.6" width="1" height="4.4" fill="#707070"/><rect x="273.64" y="5.6" width="1" height="4.4" fill="#707070"/><rect x="278.72" y="5.6" width="1" height="4.4" fill="#707070"/><rect x="283.80" y="5.6" width="1" height="4.4" fill="#707070"/><rect x="288.87" y="5.6" width="1" height="4.4" fill="#707070"/><rect x="293.95" y="5.6" width="1" height="4.4" fill="#707070"/><rect x="299.03" y="5.6" width="1" height="4.4" fill="#707070"/><rect x="304.10" y="5.6" width="1" height="4.4" fill="#707070"/><rect x="309.18" y="5.6" width="1" height="4.4" fill="#707070"/><rect x="314.26" y="5.6" width="1" height="4.4" fill="#707070"/><rect x="319.33" y="5.6" width="1" height="4.4" fill="#707070"/><rect x="324.41" y="5.6" width="1" height="4.4" fill="#707070"/><rect x="329.49" y="5.6" width="1" height="4.4" fill="#707070"/><rect x="334.56" y="5.6" width="1" height="4.4" fill="#707070"/><rect x="339.59" y="0" width="1.1" height="10.2" fill="#8c8c8c"/><rect x="344.72" y="5.6" width="1" height="4.4" fill="#707070"/><rect x="349.79" y="5.6" width="1" height="4.4" fill="#707070"/><rect x="354.87" y="5.6" width="1" height="4.4" fill="#707070"/><rect x="359.95" y="5.6" width="1" height="4.4" fill="#707070"/><rect x="365.02" y="5.6" width="1" height="4.4" fill="#707070"/><rect x="370.10" y="5.6" width="1" height="4.4" fill="#707070"/><rect x="375.18" y="5.6" width="1" height="4.4" fill="#707070"/><rect x="380.25" y="5.6" width="1" height="4.4" fill="#707070"/><rect x="385.33" y="5.6" width="1" height="4.4" fill="#707070"/><rect x="390.41" y="5.6" width="1" height="4.4" fill="#707070"/><rect x="395.48" y="5.6" width="1" height="4.4" fill="#707070"/><rect x="400.56" y="5.6" width="1" height="4.4" fill="#707070"/><rect x="405.64" y="5.6" width="1" height="4.4" fill="#707070"/><rect x="410.71" y="5.6" width="1" height="4.4" fill="#707070"/><rect x="415.74" y="0" width="1.1" height="10.2" fill="#8c8c8c"/><rect x="420.87" y="5.6" width="1" height="4.4" fill="#707070"/><rect x="425.94" y="5.6" width="1" height="4.4" fill="#707070"/><rect x="431.02" y="5.6" width="1" height="4.4" fill="#707070"/><rect x="436.10" y="5.6" width="1" height="4.4" fill="#707070"/></svg>
<div style="left:518.90px;top:685.80px;width:418.30px;height:1.80px;background:#e6e000;"></div>
<div style="left:345.00px;top:686.80px;width:173.90px;height:0.80px;background:#2e2e2e;"></div>
<div style="left:334.00px;top:714.10px;width:625.90px;height:1.00px;background:#2c2c2c;"></div>
<div style="left:334.00px;top:751.40px;width:625.90px;height:1.00px;background:#2c2c2c;"></div>
<div style="left:334.00px;top:788.60px;width:625.90px;height:1.00px;background:#2c2c2c;"></div>
<div style="left:334.00px;top:866.60px;width:625.90px;height:1.00px;background:#2c2c2c;"></div>
<div style="left:334.00px;top:903.70px;width:625.90px;height:1.00px;background:#2c2c2c;"></div>
<div style="left:334.00px;top:940.90px;width:625.90px;height:1.00px;background:#2c2c2c;"></div>
<div style="left:334.00px;top:826.60px;width:641.00px;height:3.60px;background:#333;"></div>
<div style="left:519.10px;top:687.60px;width:1.00px;height:282.40px;background:#2c2c2c;"></div>
<svg style="left:373.20px;top:727.50px;" width="11" height="13" viewBox="0 0 11 13"><path d="M2 6.2 V3.6 C2 0.2 7 0.2 7 3.4" fill="none" stroke="#cdcdcd" stroke-width="1.3"/><rect x="0.8" y="6" width="9.6" height="6.6" rx="0.8" fill="#cdcdcd"/><rect x="4.6" y="8" width="2" height="2.8" fill="#1d1d1d"/></svg>
<span class="t" style="left:394.17px;top:729.17px;font-size:10px;line-height:10px;color:#cdcdcd;transform:scaleX(0.9200);">V3</span>
<svg style="left:415.70px;top:729.50px;" width="12.4" height="9.4" viewBox="0 0 12.4 9.4"><rect x="0.6" y="0.6" width="8" height="3" rx="0.6" fill="none" stroke="#cdcdcd" stroke-width="1.1"/><rect x="0.6" y="5.6" width="8" height="3" rx="0.6" fill="none" stroke="#cdcdcd" stroke-width="1.1"/><path d="M8.8 2.1 H11.6 V7.1 H8.8" fill="none" stroke="#cdcdcd" stroke-width="1.1"/><path d="M8.6 2.1 l2 -1.5 v3 z" fill="#cdcdcd"/></svg>
<svg style="left:437.00px;top:730.30px;" width="12.4" height="7.6" viewBox="0 0 12.4 7.6"><path d="M0.5 3.8 C3 -0.4 9.4 -0.4 11.9 3.8 C9.4 8 3 8 0.5 3.8 Z" fill="none" stroke="#cdcdcd" stroke-width="1.2"/><circle cx="6.2" cy="3.8" r="1.9" fill="#cdcdcd"/></svg>
<svg style="left:373.20px;top:764.60px;" width="11" height="13" viewBox="0 0 11 13"><path d="M2 6.2 V3.6 C2 0.2 7 0.2 7 3.4" fill="none" stroke="#cdcdcd" stroke-width="1.3"/><rect x="0.8" y="6" width="9.6" height="6.6" rx="0.8" fill="#cdcdcd"/><rect x="4.6" y="8" width="2" height="2.8" fill="#1d1d1d"/></svg>
<span class="t" style="left:394.17px;top:766.27px;font-size:10px;line-height:10px;color:#cdcdcd;transform:scaleX(0.9200);">V2</span>
<svg style="left:415.70px;top:766.60px;" width="12.4" height="9.4" viewBox="0 0 12.4 9.4"><rect x="0.6" y="0.6" width="8" height="3" rx="0.6" fill="none" stroke="#cdcdcd" stroke-width="1.1"/><rect x="0.6" y="5.6" width="8" height="3" rx="0.6" fill="none" stroke="#cdcdcd" stroke-width="1.1"/><path d="M8.8 2.1 H11.6 V7.1 H8.8" fill="none" stroke="#cdcdcd" stroke-width="1.1"/><path d="M8.6 2.1 l2 -1.5 v3 z" fill="#cdcdcd"/></svg>
<svg style="left:437.00px;top:767.40px;" width="12.4" height="7.6" viewBox="0 0 12.4 7.6"><path d="M0.5 3.8 C3 -0.4 9.4 -0.4 11.9 3.8 C9.4 8 3 8 0.5 3.8 Z" fill="none" stroke="#cdcdcd" stroke-width="1.2"/><circle cx="6.2" cy="3.8" r="1.9" fill="#cdcdcd"/></svg>
<div style="left:345.50px;top:790.00px;width:21.80px;height:35.90px;background:#1c5fd2;border-radius:4.5px;"></div>
<span class="t" style="left:350.39px;top:803.02px;font-size:10px;line-height:10px;color:#fff;transform:scaleX(0.9500);-webkit-text-stroke:0.45px currentColor;">V1</span>
<svg style="left:373.20px;top:801.60px;" width="11" height="13" viewBox="0 0 11 13"><path d="M2 6.2 V3.6 C2 0.2 7 0.2 7 3.4" fill="none" stroke="#cdcdcd" stroke-width="1.3"/><rect x="0.8" y="6" width="9.6" height="6.6" rx="0.8" fill="#cdcdcd"/><rect x="4.6" y="8" width="2" height="2.8" fill="#1d1d1d"/></svg>
<div style="left:389.20px;top:790.00px;width:21.70px;height:35.90px;background:#1c5fd2;border-radius:4.5px;"></div>
<span class="t" style="left:394.04px;top:803.02px;font-size:10px;line-height:10px;color:#fff;transform:scaleX(0.9500);-webkit-text-stroke:0.45px currentColor;">V1</span>
<svg style="left:415.70px;top:803.60px;" width="12.4" height="9.4" viewBox="0 0 12.4 9.4"><rect x="0.6" y="0.6" width="8" height="3" rx="0.6" fill="none" stroke="#cdcdcd" stroke-width="1.1"/><rect x="0.6" y="5.6" width="8" height="3" rx="0.6" fill="none" stroke="#cdcdcd" stroke-width="1.1"/><path d="M8.8 2.1 H11.6 V7.1 H8.8" fill="none" stroke="#cdcdcd" stroke-width="1.1"/><path d="M8.6 2.1 l2 -1.5 v3 z" fill="#cdcdcd"/></svg>
<svg style="left:437.00px;top:804.40px;" width="12.4" height="7.6" viewBox="0 0 12.4 7.6"><path d="M0.5 3.8 C3 -0.4 9.4 -0.4 11.9 3.8 C9.4 8 3 8 0.5 3.8 Z" fill="none" stroke="#cdcdcd" stroke-width="1.2"/><circle cx="6.2" cy="3.8" r="1.9" fill="#cdcdcd"/></svg>
<div style="left:345.50px;top:831.00px;width:21.80px;height:35.50px;background:#1c5fd2;border-radius:4.5px;"></div>
<span class="t" style="left:350.39px;top:843.82px;font-size:10px;line-height:10px;color:#fff;transform:scaleX(0.9500);-webkit-text-stroke:0.45px currentColor;">A1</span>
<svg style="left:373.20px;top:842.40px;" width="11" height="13" viewBox="0 0 11 13"><path d="M2 6.2 V3.6 C2 0.2 7 0.2 7 3.4" fill="none" stroke="#cdcdcd" stroke-width="1.3"/><rect x="0.8" y="6" width="9.6" height="6.6" rx="0.8" fill="#cdcdcd"/><rect x="4.6" y="8" width="2" height="2.8" fill="#1d1d1d"/></svg>
<div style="left:389.20px;top:831.00px;width:21.70px;height:35.50px;background:#1c5fd2;border-radius:4.5px;"></div>
<span class="t" style="left:394.04px;top:843.82px;font-size:10px;line-height:10px;color:#fff;transform:scaleX(0.9500);-webkit-text-stroke:0.45px currentColor;">A1</span>
<svg style="left:415.70px;top:844.40px;" width="12.4" height="9.4" viewBox="0 0 12.4 9.4"><rect x="0.6" y="0.6" width="8" height="3" rx="0.6" fill="none" stroke="#cdcdcd" stroke-width="1.1"/><rect x="0.6" y="5.6" width="8" height="3" rx="0.6" fill="none" stroke="#cdcdcd" stroke-width="1.1"/><path d="M8.8 2.1 H11.6 V7.1 H8.8" fill="none" stroke="#cdcdcd" stroke-width="1.1"/><path d="M8.6 2.1 l2 -1.5 v3 z" fill="#cdcdcd"/></svg>
<span class="t" style="left:439.83px;top:843.67px;font-size:10px;line-height:10px;color:#cdcdcd;transform:scaleX(0.8800);">M</span>
<span class="t" style="left:462.30px;top:843.67px;font-size:10px;line-height:10px;color:#cdcdcd;transform:scaleX(0.9000);">S</span>
<svg style="left:481.70px;top:842.40px;" width="9.2" height="13.2" viewBox="0 0 9.2 13.2"><rect x="2.5" y="0.3" width="4.2" height="8" rx="2.1" fill="#cdcdcd"/><path d="M0.6 5.4 C0.6 11 8.6 11 8.6 5.4" fill="none" stroke="#cdcdcd" stroke-width="1"/><path d="M4.6 9.8 V12.2 M2.2 12.6 H7" stroke="#cdcdcd" stroke-width="1"/></svg>
<svg style="left:373.20px;top:879.40px;" width="11" height="13" viewBox="0 0 11 13"><path d="M2 6.2 V3.6 C2 0.2 7 0.2 7 3.4" fill="none" stroke="#cdcdcd" stroke-width="1.3"/><rect x="0.8" y="6" width="9.6" height="6.6" rx="0.8" fill="#cdcdcd"/><rect x="4.6" y="8" width="2" height="2.8" fill="#1d1d1d"/></svg>
<div style="left:389.20px;top:868.20px;width:21.70px;height:35.30px;background:#1c5fd2;border-radius:4.5px;"></div>
<span class="t" style="left:394.04px;top:880.92px;font-size:10px;line-height:10px;color:#fff;transform:scaleX(0.9500);-webkit-text-stroke:0.45px currentColor;">A2</span>
<svg style="left:415.70px;top:881.40px;" width="12.4" height="9.4" viewBox="0 0 12.4 9.4"><rect x="0.6" y="0.6" width="8" height="3" rx="0.6" fill="none" stroke="#cdcdcd" stroke-width="1.1"/><rect x="0.6" y="5.6" width="8" height="3" rx="0.6" fill="none" stroke="#cdcdcd" stroke-width="1.1"/><path d="M8.8 2.1 H11.6 V7.1 H8.8" fill="none" stroke="#cdcdcd" stroke-width="1.1"/><path d="M8.6 2.1 l2 -1.5 v3 z" fill="#cdcdcd"/></svg>
<span class="t" style="left:439.83px;top:880.67px;font-size:10px;line-height:10px;color:#cdcdcd;transform:scaleX(0.8800);">M</span>
<span class="t" style="left:462.30px;top:880.67px;font-size:10px;line-height:10px;color:#cdcdcd;transform:scaleX(0.9000);">S</span>
<svg style="left:481.70px;top:879.40px;" width="9.2" height="13.2" viewBox="0 0 9.2 13.2"><rect x="2.5" y="0.3" width="4.2" height="8" rx="2.1" fill="#cdcdcd"/><path d="M0.6 5.4 C0.6 11 8.6 11 8.6 5.4" fill="none" stroke="#cdcdcd" stroke-width="1"/><path d="M4.6 9.8 V12.2 M2.2 12.6 H7" stroke="#cdcdcd" stroke-width="1"/></svg>
<svg style="left:373.20px;top:916.70px;" width="11" height="13" viewBox="0 0 11 13"><path d="M2 6.2 V3.6 C2 0.2 7 0.2 7 3.4" fill="none" stroke="#cdcdcd" stroke-width="1.3"/><rect x="0.8" y="6" width="9.6" height="6.6" rx="0.8" fill="#cdcdcd"/><rect x="4.6" y="8" width="2" height="2.8" fill="#1d1d1d"/></svg>
<div style="left:389.20px;top:905.30px;width:21.70px;height:35.90px;background:#1c5fd2;border-radius:4.5px;"></div>
<span class="t" style="left:394.04px;top:918.32px;font-size:10px;line-height:10px;color:#fff;transform:scaleX(0.9500);-webkit-text-stroke:0.45px currentColor;">A3</span>
<svg style="left:415.70px;top:918.70px;" width="12.4" height="9.4" viewBox="0 0 12.4 9.4"><rect x="0.6" y="0.6" width="8" height="3" rx="0.6" fill="none" stroke="#cdcdcd" stroke-width="1.1"/><rect x="0.6" y="5.6" width="8" height="3" rx="0.6" fill="none" stroke="#cdcdcd" stroke-width="1.1"/><path d="M8.8 2.1 H11.6 V7.1 H8.8" fill="none" stroke="#cdcdcd" stroke-width="1.1"/><path d="M8.6 2.1 l2 -1.5 v3 z" fill="#cdcdcd"/></svg>
<span class="t" style="left:439.83px;top:917.97px;font-size:10px;line-height:10px;color:#cdcdcd;transform:scaleX(0.8800);">M</span>
<span class="t" style="left:462.30px;top:917.97px;font-size:10px;line-height:10px;color:#cdcdcd;transform:scaleX(0.9000);">S</span>
<svg style="left:481.70px;top:916.70px;" width="9.2" height="13.2" viewBox="0 0 9.2 13.2"><rect x="2.5" y="0.3" width="4.2" height="8" rx="2.1" fill="#cdcdcd"/><path d="M0.6 5.4 C0.6 11 8.6 11 8.6 5.4" fill="none" stroke="#cdcdcd" stroke-width="1"/><path d="M4.6 9.8 V12.2 M2.2 12.6 H7" stroke="#cdcdcd" stroke-width="1"/></svg>
<svg style="left:373.20px;top:954.10px;" width="11" height="13" viewBox="0 0 11 13"><path d="M2 6.2 V3.6 C2 0.2 7 0.2 7 3.4" fill="none" stroke="#cdcdcd" stroke-width="1.3"/><rect x="0.8" y="6" width="9.6" height="6.6" rx="0.8" fill="#cdcdcd"/><rect x="4.6" y="8" width="2" height="2.8" fill="#1d1d1d"/></svg>
<span class="t" style="left:392.70px;top:955.98px;font-size:11px;line-height:11px;color:#cdcdcd;transform:scaleX(0.9645);">Mix</span>
<span class="t" style="left:447.50px;top:955.98px;font-size:11px;line-height:11px;color:#4a9df8;transform:scaleX(0.9025);">0,0</span>
<svg style="left:503.60px;top:956.10px;" width="10.6" height="9.2" viewBox="0 0 10.6 9.2"><path d="M0.3 0.3 L5.3 4.6 L0.3 8.9 Z M10.3 0.3 L5.3 4.6 L10.3 8.9 Z" fill="#cdcdcd"/></svg>
<div style="left:520.00px;top:790.00px;width:135.60px;height:35.90px;background:#0a4e70;"></div>
<span class="t" style="left:526.90px;top:793.32px;font-size:10.5px;line-height:10.5px;color:#e6e6e6;transform:scaleX(0.8167);">FX30_SLog3_60fps_2...</span>
<span class="t" style="left:638.90px;top:791.58px;font-size:11px;line-height:11px;color:#4c7f98;font-style:italic;font-family:'Liberation Serif',serif;transform:scaleX(0.95);">fx</span>
<div style="left:656.60px;top:790.00px;width:100.20px;height:35.90px;background:#0a4e70;"></div>
<span class="t" style="left:663.70px;top:793.32px;font-size:10.5px;line-height:10.5px;color:#e6e6e6;transform:scaleX(0.7922);">FX30_SLog3...</span>
<span class="t" style="left:740.60px;top:791.58px;font-size:11px;line-height:11px;color:#4c7f98;font-style:italic;font-family:'Liberation Serif',serif;transform:scaleX(0.95);">fx</span>
<svg style="left:657.00px;top:804.40px;" width="38.8" height="21.5" viewBox="0 0 38.8 21.5"><defs><linearGradient id="th2" x1="0" y1="0" x2="0" y2="1"><stop offset="0" stop-color="#2a1420"/><stop offset=".3" stop-color="#8a3a18"/><stop offset=".6" stop-color="#9a5424"/><stop offset="1" stop-color="#3a1c10"/></linearGradient><filter id="tb"><feGaussianBlur stdDeviation="0.8"/></filter></defs><rect width="38.8" height="21.5" fill="url(#th2)"/><g filter="url(#tb)"><rect x="2" y="3" width="8" height="4" fill="#f0b040"/><rect x="26" y="2" width="10" height="4" fill="#ff8a3a"/><rect x="12" y="4" width="5" height="3" fill="#5a7ae0"/><rect x="20" y="5" width="3" height="9" fill="#1a0e0c"/><rect x="8" y="12" width="22" height="6" fill="#8a4a2a" opacity=".7"/></g></svg>
<div style="left:758.10px;top:789.60px;width:178.20px;height:36.00px;background:#0a5982;border:2px solid #f2f2f2;border-radius:3px;box-sizing:border-box;box-shadow:inset 0 0 0 1px #0a3046;"></div>
<span class="t" style="left:765.60px;top:793.32px;font-size:10.5px;line-height:10.5px;color:#f0f0f0;transform:scaleX(0.8537);">FX30_SLog3_60fps_4.mp4 [V]</span>
<span class="t" style="left:918.90px;top:791.58px;font-size:11px;line-height:11px;color:#f0f0f0;font-style:italic;font-family:'Liberation Serif',serif;transform:scaleX(0.95);">fx</span>
<svg style="left:761.00px;top:804.20px;" width="36.6" height="18.8" viewBox="0 0 36.6 18.8"><rect width="36.6" height="18.8" fill="#fffefa"/><path d="M27 0.5 q3 8 9 11" stroke="#d9a58c" stroke-width="1.6" fill="none" opacity=".8"/><path d="M4 4 h2 M9 6 h1.5 M14 3.5 h2 M19 5 h1 M11 10 h1" stroke="#e3e070" stroke-width="1.4" opacity=".8"/></svg>
<div style="left:520.00px;top:830.80px;width:135.60px;height:36.20px;background:#0a4e70;"></div>
<div style="left:520.00px;top:854.90px;width:135.60px;height:1.50px;background:#3f9fd6;"></div>
<div style="left:520.00px;top:865.40px;width:135.60px;height:1.60px;background:#3f9fd6;"></div>
<div style="left:520.00px;top:849.90px;width:135.60px;height:1.20px;background:#d8d8d8;"></div>
<div style="left:656.60px;top:830.80px;width:100.20px;height:36.20px;background:#0a4e70;"></div>
<div style="left:656.60px;top:854.90px;width:100.20px;height:1.50px;background:#3f9fd6;"></div>
<div style="left:656.60px;top:865.40px;width:100.20px;height:1.60px;background:#3f9fd6;"></div>
<div style="left:656.60px;top:849.90px;width:100.20px;height:1.20px;background:#d8d8d8;"></div>
<div style="left:758.10px;top:830.40px;width:178.20px;height:36.50px;background:#0a5982;border:2px solid #f2f2f2;border-radius:3px;box-sizing:border-box;box-shadow:inset 0 0 0 1px #0a3046;"></div>
<div style="left:760.30px;top:854.90px;width:173.70px;height:1.50px;background:#3f9fd6;"></div>
<div style="left:769.30px;top:849.90px;width:155.70px;height:1.20px;background:#d8d8d8;"></div>
<svg style="left:617.10px;top:834.80px;" width="10.6" height="8" viewBox="0 0 10.6 8"><path d="M0.5 3.2 V4.8 M2.4 2 V6 M4.3 0.4 V7.6 M6.2 1.6 V6.4 M8.1 0.8 V7.2 M10 3.2 V4.8" stroke="#b8ccd6" stroke-width="1.1"/></svg>
<span class="t" style="left:638.90px;top:832.38px;font-size:11px;line-height:11px;color:#4c7f98;font-style:italic;font-family:'Liberation Serif',serif;transform:scaleX(0.95);">fx</span>
<svg style="left:718.80px;top:834.80px;" width="10.6" height="8" viewBox="0 0 10.6 8"><path d="M0.5 3.2 V4.8 M2.4 2 V6 M4.3 0.4 V7.6 M6.2 1.6 V6.4 M8.1 0.8 V7.2 M10 3.2 V4.8" stroke="#b8ccd6" stroke-width="1.1"/></svg>
<span class="t" style="left:740.60px;top:832.38px;font-size:11px;line-height:11px;color:#4c7f98;font-style:italic;font-family:'Liberation Serif',serif;transform:scaleX(0.95);">fx</span>
<svg style="left:898.20px;top:834.80px;" width="10.6" height="8" viewBox="0 0 10.6 8"><path d="M0.5 3.2 V4.8 M2.4 2 V6 M4.3 0.4 V7.6 M6.2 1.6 V6.4 M8.1 0.8 V7.2 M10 3.2 V4.8" stroke="#e8e8e8" stroke-width="1.1"/></svg>
<span class="t" style="left:918.90px;top:832.38px;font-size:11px;line-height:11px;color:#5f93ad;font-style:italic;font-family:'Liberation Serif',serif;transform:scaleX(0.95);">fx</span>
<svg style="left:765.30px;top:845.70px;" width="9" height="9" viewBox="0 0 8.4 8.4"><rect x="0.5" y="0.5" width="8" height="8" rx="0.8" fill="#7c7c7c" stroke="#e0e0e0" stroke-width="1"/><path d="M0.6 7.4 L7.4 0.6 V7.4 Z" fill="#c8c8c8"/></svg>
<svg style="left:921.20px;top:845.70px;" width="9" height="9" viewBox="0 0 8.4 8.4"><rect x="0.5" y="0.5" width="8" height="8" rx="0.8" fill="#7c7c7c" stroke="#e0e0e0" stroke-width="1"/><path d="M0.6 0.6 L7.4 7.4 H0.6 Z" fill="#c8c8c8"/></svg>
<svg style="left:651.80px;top:790.00px;" width="7.6" height="4.6" viewBox="0 0 7.6 4.6"><path d="M0.2 0 H7.4 C7 2.6 5.4 4 3.8 4.4 C2.2 4 0.6 2.6 0.2 0 Z" fill="#f0f0f0"/><rect x="3.3" y="0" width="1" height="4.6" fill="#222"/></svg>
<svg style="left:651.80px;top:830.80px;" width="7.6" height="4.6" viewBox="0 0 7.6 4.6"><path d="M0.2 0 H7.4 C7 2.6 5.4 4 3.8 4.4 C2.2 4 0.6 2.6 0.2 0 Z" fill="#f0f0f0"/><rect x="3.3" y="0" width="1" height="4.6" fill="#222"/></svg>
<div style="left:655.60px;top:794.00px;width:1.00px;height:32.00px;background:#15202a;"></div>
<div style="left:655.60px;top:835.00px;width:1.00px;height:32.00px;background:#15202a;"></div>
<div style="left:520.00px;top:951.90px;width:435.40px;height:1.80px;background:#cfcfcf;"></div>
<div style="left:855.30px;top:684.00px;width:1.20px;height:286.30px;background:#3f86e4;"></div>
<svg style="left:850.60px;top:674.60px;" width="10.8" height="10" viewBox="0 0 10.8 10"><path d="M0.4 0 H10.4 V6 L5.4 10 L0.4 6 Z" fill="#3f8ff0"/></svg>
<div style="left:344.40px;top:971.10px;width:620.10px;height:10.70px;background:#333;"></div>
<div style="left:413.80px;top:971.10px;width:137.50px;height:10.70px;background:#4b4b4b;"></div>
<div style="left:408.20px;top:970.70px;width:11.20px;height:11.20px;border-radius:50%;background:#1a1a1a;border:2.1px solid #e6e6e6;box-sizing:border-box;"></div>
<div style="left:545.70px;top:970.70px;width:11.20px;height:11.20px;border-radius:50%;background:#1a1a1a;border:2.1px solid #e6e6e6;box-sizing:border-box;"></div>
<div style="left:959.90px;top:691.30px;width:10.70px;height:132.10px;background:#4b4b4b;"></div>
<div style="left:959.90px;top:831.00px;width:10.70px;height:134.80px;background:#4b4b4b;"></div>
<div style="left:959.60px;top:696.40px;width:11.20px;height:11.20px;border-radius:50%;background:#1a1a1a;border:2.1px solid #e6e6e6;box-sizing:border-box;"></div>
<div style="left:959.60px;top:812.10px;width:11.20px;height:11.20px;border-radius:50%;background:#1a1a1a;border:2.1px solid #e6e6e6;box-sizing:border-box;"></div>
<div style="left:959.60px;top:833.80px;width:11.20px;height:11.20px;border-radius:50%;background:#1a1a1a;border:2.1px solid #e6e6e6;box-sizing:border-box;"></div>
<div style="left:959.60px;top:949.50px;width:11.20px;height:11.20px;border-radius:50%;background:#1a1a1a;border:2.1px solid #e6e6e6;box-sizing:border-box;"></div>
<div style="left:1000.00px;top:635.40px;width:30.80px;height:323.60px;background:#000;"></div>
<div style="left:1000.00px;top:635.40px;width:30.80px;height:7.80px;background:#0a0a0a;"></div>
<div style="left:1000.00px;top:643.00px;width:30.80px;height:0.80px;background:#1c1c1c;"></div>
<div style="left:1015.00px;top:635.40px;width:0.80px;height:7.60px;background:#1c1c1c;"></div>
<div style="left:1031.20px;top:645.10px;width:3.80px;height:1.20px;background:#b0b0b0;"></div>
<span class="t" style="left:1038.50px;top:640.51px;font-size:9.5px;line-height:9.5px;color:#cfcfcf;transform:scaleX(0.9000);">0</span>
<div style="left:1031.20px;top:676.67px;width:3.80px;height:1.20px;background:#b0b0b0;"></div>
<span class="t" style="left:1038.50px;top:672.08px;font-size:9.5px;line-height:9.5px;color:#cfcfcf;transform:scaleX(0.9000);">-6</span>
<div style="left:1031.20px;top:708.24px;width:3.80px;height:1.20px;background:#b0b0b0;"></div>
<span class="t" style="left:1038.50px;top:703.65px;font-size:9.5px;line-height:9.5px;color:#cfcfcf;transform:scaleX(0.9000);">-12</span>
<div style="left:1031.20px;top:739.81px;width:3.80px;height:1.20px;background:#b0b0b0;"></div>
<span class="t" style="left:1038.50px;top:735.22px;font-size:9.5px;line-height:9.5px;color:#cfcfcf;transform:scaleX(0.9000);">-18</span>
<div style="left:1031.20px;top:771.38px;width:3.80px;height:1.20px;background:#b0b0b0;"></div>
<span class="t" style="left:1038.50px;top:766.79px;font-size:9.5px;line-height:9.5px;color:#cfcfcf;transform:scaleX(0.9000);">-24</span>
<div style="left:1031.20px;top:802.95px;width:3.80px;height:1.20px;background:#b0b0b0;"></div>
<span class="t" style="left:1038.50px;top:798.36px;font-size:9.5px;line-height:9.5px;color:#cfcfcf;transform:scaleX(0.9000);">-30</span>
<div style="left:1031.20px;top:834.52px;width:3.80px;height:1.20px;background:#b0b0b0;"></div>
<span class="t" style="left:1038.50px;top:829.93px;font-size:9.5px;line-height:9.5px;color:#cfcfcf;transform:scaleX(0.9000);">-36</span>
<div style="left:1031.20px;top:866.09px;width:3.80px;height:1.20px;background:#b0b0b0;"></div>
<span class="t" style="left:1038.50px;top:861.50px;font-size:9.5px;line-height:9.5px;color:#cfcfcf;transform:scaleX(0.9000);">-42</span>
<div style="left:1031.20px;top:897.66px;width:3.80px;height:1.20px;background:#b0b0b0;"></div>
<span class="t" style="left:1038.50px;top:893.07px;font-size:9.5px;line-height:9.5px;color:#cfcfcf;transform:scaleX(0.9000);">-48</span>
<div style="left:1031.20px;top:929.23px;width:3.80px;height:1.20px;background:#b0b0b0;"></div>
<span class="t" style="left:1038.50px;top:924.64px;font-size:9.5px;line-height:9.5px;color:#cfcfcf;transform:scaleX(0.9000);">-54</span>
<span class="t" style="left:1039.50px;top:952.81px;font-size:9.5px;line-height:9.5px;color:#cfcfcf;transform:scaleX(0.9985);">dB</span>
<svg style="left:1031.50px;top:640.00px;" width="2" height="322" viewBox="0 0 2 322"><rect x="0" y="5.20" width="1.6" height="1" fill="#8a8a8a"/><rect x="0" y="10.46" width="1.6" height="1" fill="#8a8a8a"/><rect x="0" y="15.72" width="1.6" height="1" fill="#8a8a8a"/><rect x="0" y="20.99" width="1.6" height="1" fill="#8a8a8a"/><rect x="0" y="26.25" width="1.6" height="1" fill="#8a8a8a"/><rect x="0" y="31.51" width="1.6" height="1" fill="#8a8a8a"/><rect x="0" y="36.77" width="1.6" height="1" fill="#8a8a8a"/><rect x="0" y="42.03" width="1.6" height="1" fill="#8a8a8a"/><rect x="0" y="47.29" width="1.6" height="1" fill="#8a8a8a"/><rect x="0" y="52.56" width="1.6" height="1" fill="#8a8a8a"/><rect x="0" y="57.82" width="1.6" height="1" fill="#8a8a8a"/><rect x="0" y="63.08" width="1.6" height="1" fill="#8a8a8a"/><rect x="0" y="68.34" width="1.6" height="1" fill="#8a8a8a"/><rect x="0" y="73.60" width="1.6" height="1" fill="#8a8a8a"/><rect x="0" y="78.86" width="1.6" height="1" fill="#8a8a8a"/><rect x="0" y="84.12" width="1.6" height="1" fill="#8a8a8a"/><rect x="0" y="89.39" width="1.6" height="1" fill="#8a8a8a"/><rect x="0" y="94.65" width="1.6" height="1" fill="#8a8a8a"/><rect x="0" y="99.91" width="1.6" height="1" fill="#8a8a8a"/><rect x="0" y="105.17" width="1.6" height="1" fill="#8a8a8a"/><rect x="0" y="110.43" width="1.6" height="1" fill="#8a8a8a"/><rect x="0" y="115.70" width="1.6" height="1" fill="#8a8a8a"/><rect x="0" y="120.96" width="1.6" height="1" fill="#8a8a8a"/><rect x="0" y="126.22" width="1.6" height="1" fill="#8a8a8a"/><rect x="0" y="131.48" width="1.6" height="1" fill="#8a8a8a"/><rect x="0" y="136.74" width="1.6" height="1" fill="#8a8a8a"/><rect x="0" y="142.00" width="1.6" height="1" fill="#8a8a8a"/><rect x="0" y="147.27" width="1.6" height="1" fill="#8a8a8a"/><rect x="0" y="152.53" width="1.6" height="1" fill="#8a8a8a"/><rect x="0" y="157.79" width="1.6" height="1" fill="#8a8a8a"/><rect x="0" y="163.05" width="1.6" height="1" fill="#8a8a8a"/><rect x="0" y="168.31" width="1.6" height="1" fill="#8a8a8a"/><rect x="0" y="173.57" width="1.6" height="1" fill="#8a8a8a"/><rect x="0" y="178.84" width="1.6" height="1" fill="#8a8a8a"/><rect x="0" y="184.10" width="1.6" height="1" fill="#8a8a8a"/><rect x="0" y="189.36" width="1.6" height="1" fill="#8a8a8a"/><rect x="0" y="194.62" width="1.6" height="1" fill="#8a8a8a"/><rect x="0" y="199.88" width="1.6" height="1" fill="#8a8a8a"/><rect x="0" y="205.14" width="1.6" height="1" fill="#8a8a8a"/><rect x="0" y="210.41" width="1.6" height="1" fill="#8a8a8a"/><rect x="0" y="215.67" width="1.6" height="1" fill="#8a8a8a"/><rect x="0" y="220.93" width="1.6" height="1" fill="#8a8a8a"/><rect x="0" y="226.19" width="1.6" height="1" fill="#8a8a8a"/><rect x="0" y="231.45" width="1.6" height="1" fill="#8a8a8a"/><rect x="0" y="236.71" width="1.6" height="1" fill="#8a8a8a"/><rect x="0" y="241.98" width="1.6" height="1" fill="#8a8a8a"/><rect x="0" y="247.24" width="1.6" height="1" fill="#8a8a8a"/><rect x="0" y="252.50" width="1.6" height="1" fill="#8a8a8a"/><rect x="0" y="257.76" width="1.6" height="1" fill="#8a8a8a"/><rect x="0" y="263.02" width="1.6" height="1" fill="#8a8a8a"/><rect x="0" y="268.28" width="1.6" height="1" fill="#8a8a8a"/><rect x="0" y="273.55" width="1.6" height="1" fill="#8a8a8a"/><rect x="0" y="278.81" width="1.6" height="1" fill="#8a8a8a"/><rect x="0" y="284.07" width="1.6" height="1" fill="#8a8a8a"/><rect x="0" y="289.33" width="1.6" height="1" fill="#8a8a8a"/><rect x="0" y="294.59" width="1.6" height="1" fill="#8a8a8a"/><rect x="0" y="299.85" width="1.6" height="1" fill="#8a8a8a"/><rect x="0" y="305.12" width="1.6" height="1" fill="#8a8a8a"/><rect x="0" y="310.38" width="1.6" height="1" fill="#8a8a8a"/><rect x="0" y="315.64" width="1.6" height="1" fill="#8a8a8a"/></svg>
<div style="left:1000.30px;top:960.20px;width:14.30px;height:1.40px;background:#c8c800;"></div>
<div style="left:1016.20px;top:960.20px;width:14.80px;height:1.40px;background:#c8c800;"></div>
<span class="t" style="left:1005.40px;top:970.01px;font-size:9.5px;line-height:9.5px;color:#bdbdbd;transform:scaleX(0.9985);">S</span>
<span class="t" style="left:1020.90px;top:970.01px;font-size:9.5px;line-height:9.5px;color:#bdbdbd;transform:scaleX(0.9985);">S</span>
<span class="t" style="left:1077.50px;top:76.08px;font-size:11px;line-height:11px;color:#ececec;transform:scaleX(0.9194);">Lumetri Color</span>
<div style="left:1147.50px;top:77.70px;width:7.50px;height:1.10px;background:#c8c8c8;"></div>
<div style="left:1147.50px;top:80.70px;width:7.50px;height:1.10px;background:#c8c8c8;"></div>
<div style="left:1147.50px;top:83.70px;width:7.50px;height:1.10px;background:#c8c8c8;"></div>
<div style="left:1077.50px;top:88.90px;width:77.50px;height:1.80px;background:#d8d8d8;"></div>
<span class="t" style="left:1175.70px;top:76.08px;font-size:11px;line-height:11px;color:#cfcfcf;transform:scaleX(0.8976);">Properties</span>
<span class="t" style="left:1084.40px;top:103.58px;font-size:11px;line-height:11px;color:#ececec;transform:scaleX(0.8705);">Edit</span>
<div style="left:1084.40px;top:115.90px;width:16.60px;height:2.00px;background:#e0e0e0;"></div>
<span class="t" style="left:1120.20px;top:103.58px;font-size:11px;line-height:11px;color:#cfcfcf;transform:scaleX(0.8730);">Settings</span>
<div style="left:1082.60px;top:133.60px;width:190.80px;height:21.20px;background:#161616;border:1px solid #333;border-radius:3.5px;box-sizing:border-box;"></div>
<svg style="left:1088.50px;top:137.40px;" width="14" height="14" viewBox="0 0 14 14"><rect x="0.5" y="0.5" width="9.6" height="9.6" rx="0.8" fill="#bdbdbd"/><rect x="1.6" y="1.8" width="1.1" height="1.3" fill="#222"/><rect x="1.6" y="4.6" width="1.1" height="1.3" fill="#222"/><rect x="1.6" y="7.4" width="1.1" height="1.3" fill="#222"/><rect x="3.2" y="6" width="10.4" height="7.6" rx="1.1" fill="#161616"/><rect x="4" y="6.8" width="8.8" height="6" rx="0.8" fill="none" stroke="#bdbdbd" stroke-width="1.2"/><path d="M5.4 9.8 h6 M6.8 8.6 v2.4 M8.4 8.3 v3 M10 8.6 v2.4" stroke="#bdbdbd" stroke-width="1"/></svg>
<span class="t" style="left:1109.30px;top:139.28px;font-size:11px;line-height:11px;color:#d8d8d8;transform:scaleX(0.8742);">Source · FX30_SLog3_60fps_4.mp4</span>
<div style="left:1278.20px;top:133.60px;width:272.50px;height:21.20px;background:#4a4a4a;border-radius:3.5px;"></div>
<svg style="left:1285.10px;top:138.40px;" width="13.4" height="11.6" viewBox="0 0 13.4 11.6"><path d="M6.7 0.2 V11.4" stroke="#e8e8e8" stroke-width="1.2"/><path d="M0.4 2.6 H4.8 M0.4 5.8 H4.8 M0.4 9 H4.8 M8.6 2.6 H13 M8.6 5.8 H13 M8.6 9 H13" stroke="#e8e8e8" stroke-width="1.3" stroke-dasharray="2.6 1.4"/><path d="M4.2 4.2 L6.7 5.8 L4.2 7.4 Z M9.2 4.2 L6.7 5.8 L9.2 7.4 Z" fill="#e8e8e8"/></svg>
<span class="t" style="left:1305.20px;top:139.28px;font-size:11px;line-height:11px;color:#ececec;transform:scaleX(0.8732);">A003C004_140418_R2JV · FX30_SLog3_60fps_4.mp4</span>
<svg style="left:1545.00px;top:148.60px;" width="4" height="4" viewBox="0 0 4 4"><path d="M4 0 V4 H0 Z" fill="#e0e0e0"/></svg>
<div style="left:1082.60px;top:166.50px;width:468.10px;height:20.50px;background:#000;border:1px solid #353535;border-radius:4px;box-sizing:border-box;"></div>
<span class="t" style="left:1090.30px;top:172.03px;font-size:11px;line-height:11px;color:#e0e0e0;transform:scaleX(0.9118);">Lumetri Color</span>
<svg style="left:1533.60px;top:174.05px;" width="9.800000000000182" height="6.3900000000001" viewBox="0 0 9.800000000000182 6.3900000000001"><path d="M0.6 0.6 L4.90 5.39 L9.20 0.6" fill="none" stroke="#e0e0e0" stroke-width="1.5"/></svg>
<span class="t" style="left:1559px;top:168.6px;font-size:15px;line-height:15px;color:#d6d6d6;font-style:italic;font-family:'Liberation Serif',serif;transform:scaleX(0.95);">fx</span>
<svg style="left:1583.60px;top:171.20px;" width="14.4" height="10.6" viewBox="0 0 14.4 10.6"><path d="M13.2 7.2 A5.3 5.3 0 0 0 3.6 4.4" fill="none" stroke="#d6d6d6" stroke-width="1.5"/><path d="M0.6 1.2 L1.4 6.6 L6.2 4.6 Z" fill="#d6d6d6"/><path d="M1 9.7 H13.6" stroke="#d6d6d6" stroke-width="1.4"/></svg>
<div style="left:1068.50px;top:198.20px;width:547.50px;height:1.00px;background:#141414;"></div>
<div style="left:1068.50px;top:235.70px;width:532.70px;height:1.00px;background:#141414;"></div>
<div style="left:1068.50px;top:272.90px;width:532.70px;height:1.00px;background:#141414;"></div>
<div style="left:1068.50px;top:310.10px;width:532.70px;height:1.00px;background:#141414;"></div>
<div style="left:1068.50px;top:652.80px;width:532.70px;height:1.00px;background:#141414;"></div>
<div style="left:1068.50px;top:689.70px;width:532.70px;height:1.00px;background:#141414;"></div>
<svg style="left:1078.20px;top:212.60px;" width="7" height="10" viewBox="0 0 7 10"><path d="M1 0.8 L5.4 5 L1 9.2" fill="none" stroke="#e0e0e0" stroke-width="1.7"/></svg>
<span class="t" style="left:1094.70px;top:212.92px;font-size:10.5px;line-height:10.5px;color:#dedede;font-weight:bold;transform:scaleX(0.8807);">Basic Correction</span>
<div style="left:1564.60px;top:211.00px;width:21.20px;height:11.40px;background:#a6a6a6;border:1.3px solid #e6e6e6;box-sizing:border-box;border-radius:5.7px;box-shadow:0 0 0 1px #050505;"></div>
<div style="left:1576.70px;top:213.40px;width:6.60px;height:6.60px;background:#0a0a0a;border-radius:50%;box-shadow:0 0 0 1px #e0e0e0;"></div>
<svg style="left:1078.20px;top:249.60px;" width="7" height="10" viewBox="0 0 7 10"><path d="M1 0.8 L5.4 5 L1 9.2" fill="none" stroke="#e0e0e0" stroke-width="1.7"/></svg>
<span class="t" style="left:1094.70px;top:249.92px;font-size:10.5px;line-height:10.5px;color:#dedede;font-weight:bold;transform:scaleX(0.9049);">Creative</span>
<div style="left:1564.60px;top:248.00px;width:21.20px;height:11.40px;background:#a6a6a6;border:1.3px solid #e6e6e6;box-sizing:border-box;border-radius:5.7px;box-shadow:0 0 0 1px #050505;"></div>
<div style="left:1576.70px;top:250.40px;width:6.60px;height:6.60px;background:#0a0a0a;border-radius:50%;box-shadow:0 0 0 1px #e0e0e0;"></div>
<svg style="left:1078.20px;top:286.80px;" width="7" height="10" viewBox="0 0 7 10"><path d="M1 0.8 L5.4 5 L1 9.2" fill="none" stroke="#e0e0e0" stroke-width="1.7"/></svg>
<span class="t" style="left:1094.70px;top:287.12px;font-size:10.5px;line-height:10.5px;color:#dedede;font-weight:bold;transform:scaleX(0.8707);">Curves</span>
<div style="left:1564.60px;top:285.20px;width:21.20px;height:11.40px;background:#a6a6a6;border:1.3px solid #e6e6e6;box-sizing:border-box;border-radius:5.7px;box-shadow:0 0 0 1px #050505;"></div>
<div style="left:1576.70px;top:287.60px;width:6.60px;height:6.60px;background:#0a0a0a;border-radius:50%;box-shadow:0 0 0 1px #e0e0e0;"></div>
<svg style="left:1076.80px;top:325.60px;" width="10" height="7" viewBox="0 0 10 7"><path d="M0.8 1 L5 5.4 L9.2 1" fill="none" stroke="#e0e0e0" stroke-width="1.7"/></svg>
<span class="t" style="left:1094.70px;top:324.32px;font-size:10.5px;line-height:10.5px;color:#dedede;font-weight:bold;transform:scaleX(0.9148);">Color Wheels &amp; Match</span>
<div style="left:1564.60px;top:322.40px;width:21.20px;height:11.40px;background:#a6a6a6;border:1.3px solid #e6e6e6;box-sizing:border-box;border-radius:5.7px;box-shadow:0 0 0 1px #050505;"></div>
<div style="left:1576.70px;top:324.80px;width:6.60px;height:6.60px;background:#0a0a0a;border-radius:50%;box-shadow:0 0 0 1px #e0e0e0;"></div>
<svg style="left:1078.20px;top:667.00px;" width="7" height="10" viewBox="0 0 7 10"><path d="M1 0.8 L5.4 5 L1 9.2" fill="none" stroke="#e0e0e0" stroke-width="1.7"/></svg>
<span class="t" style="left:1094.70px;top:667.32px;font-size:10.5px;line-height:10.5px;color:#dedede;font-weight:bold;transform:scaleX(0.8951);">HSL Secondary</span>
<div style="left:1564.60px;top:665.40px;width:21.20px;height:11.40px;background:#a6a6a6;border:1.3px solid #e6e6e6;box-sizing:border-box;border-radius:5.7px;box-shadow:0 0 0 1px #050505;"></div>
<div style="left:1576.70px;top:667.80px;width:6.60px;height:6.60px;background:#0a0a0a;border-radius:50%;box-shadow:0 0 0 1px #e0e0e0;"></div>
<svg style="left:1078.20px;top:704.20px;" width="7" height="10" viewBox="0 0 7 10"><path d="M1 0.8 L5.4 5 L1 9.2" fill="none" stroke="#e0e0e0" stroke-width="1.7"/></svg>
<span class="t" style="left:1094.70px;top:704.52px;font-size:10.5px;line-height:10.5px;color:#dedede;font-weight:bold;transform:scaleX(0.9289);">Vignette</span>
<div style="left:1564.60px;top:702.60px;width:21.20px;height:11.40px;background:#a6a6a6;border:1.3px solid #e6e6e6;box-sizing:border-box;border-radius:5.7px;box-shadow:0 0 0 1px #050505;"></div>
<div style="left:1576.70px;top:705.00px;width:6.60px;height:6.60px;background:#0a0a0a;border-radius:50%;box-shadow:0 0 0 1px #e0e0e0;"></div>
<span class="t" style="left:1094.70px;top:354.28px;font-size:11px;line-height:11px;color:#d0d0d0;transform:scaleX(0.9039);">Color Match</span>
<div style="left:1490.50px;top:348.20px;width:94.80px;height:20.10px;background:#111;border:1px solid #353535;border-radius:3.5px;box-sizing:border-box;"></div>
<span class="t" style="left:1498.50px;top:353.28px;font-size:11px;line-height:11px;color:#e0e0e0;transform:scaleX(0.9035);">Comparison View</span>
<svg style="left:1094.70px;top:389.40px;" width="11.6" height="11.6" viewBox="0 0 12 12"><rect x="0" y="0" width="12" height="12" rx="2" fill="#d2d2d2"/><path d="M2.6 6.2 L5 8.6 L9.5 3.3" fill="none" stroke="#1a1a1a" stroke-width="1.7"/></svg>
<span class="t" style="left:1114.00px;top:391.08px;font-size:11px;line-height:11px;color:#d0d0d0;transform:scaleX(0.8827);">Face Detection</span>
<div style="left:1513.10px;top:381.00px;width:72.20px;height:21.20px;border:1px solid #333;border-radius:3.5px;box-sizing:border-box;"></div>
<span class="t" style="left:1520.80px;top:386.88px;font-size:11px;line-height:11px;color:#6e6e6e;transform:scaleX(0.9153);">Apply Match</span>
<div style="left:1094.70px;top:481.90px;width:5.40px;height:143.40px;background:#000;"></div>
<svg style="left:1094.70px;top:549.60px;" width="10" height="7.6" viewBox="0 0 10 7.6"><path d="M0.2 0.4 H6 L9.6 3.8 L6 7.2 H0.2 Z" fill="#c8c8c8"/></svg>
<div style="left:1108.20px;top:481.20px;width:144.40px;height:144.40px;border-radius:50%;background:radial-gradient(circle closest-side, rgba(0,0,0,0) 0, rgba(0,0,0,0) 57.3%, rgba(40,40,40,.28) 57.8%, rgba(0,0,0,0) 92%),conic-gradient(from 0deg, #ff1a1a 0deg, #ff00c8 45deg, #ff00ff 60deg, #a000ff 90deg, #1a1aff 120deg, #00a0ff 150deg, #00ffff 180deg, #00ff90 210deg, #00ff00 240deg, #a0ff00 275deg, #ffff00 300deg, #ff9000 330deg, #ff1a1a 360deg);"></div>
<div style="left:1139.00px;top:512.00px;width:82.80px;height:82.80px;border-radius:50%;background:#1d1d1d;"></div>
<svg style="left:1175.90px;top:548.90px;" width="9" height="9" viewBox="0 0 9 9"><path d="M4.5 0 V9 M0 4.5 H9" stroke="#e0e0e0" stroke-width="1.1"/></svg>
<div style="left:1264.30px;top:442.80px;width:5.50px;height:143.40px;background:#000;"></div>
<svg style="left:1264.30px;top:510.90px;" width="10" height="7.6" viewBox="0 0 10 7.6"><path d="M0.2 0.4 H6 L9.6 3.8 L6 7.2 H0.2 Z" fill="#c8c8c8"/></svg>
<div style="left:1277.80px;top:442.50px;width:144.40px;height:144.40px;border-radius:50%;background:radial-gradient(circle closest-side, rgba(0,0,0,0) 0, rgba(0,0,0,0) 57.3%, rgba(40,40,40,.28) 57.8%, rgba(0,0,0,0) 92%),conic-gradient(from 0deg, #ff1a1a 0deg, #ff00c8 45deg, #ff00ff 60deg, #a000ff 90deg, #1a1aff 120deg, #00a0ff 150deg, #00ffff 180deg, #00ff90 210deg, #00ff00 240deg, #a0ff00 275deg, #ffff00 300deg, #ff9000 330deg, #ff1a1a 360deg);"></div>
<div style="left:1308.60px;top:473.30px;width:82.80px;height:82.80px;border-radius:50%;background:#1d1d1d;"></div>
<div style="left:1434.00px;top:481.90px;width:5.40px;height:143.40px;background:#000;"></div>
<svg style="left:1434.00px;top:549.60px;" width="10" height="7.6" viewBox="0 0 10 7.6"><path d="M0.2 0.4 H6 L9.6 3.8 L6 7.2 H0.2 Z" fill="#c8c8c8"/></svg>
<div style="left:1447.50px;top:481.20px;width:144.40px;height:144.40px;border-radius:50%;background:radial-gradient(circle closest-side, rgba(0,0,0,0) 0, rgba(0,0,0,0) 57.3%, rgba(40,40,40,.28) 57.8%, rgba(0,0,0,0) 92%),conic-gradient(from 0deg, #ff1a1a 0deg, #ff00c8 45deg, #ff00ff 60deg, #a000ff 90deg, #1a1aff 120deg, #00a0ff 150deg, #00ffff 180deg, #00ff90 210deg, #00ff00 240deg, #a0ff00 275deg, #ffff00 300deg, #ff9000 330deg, #ff1a1a 360deg);"></div>
<div style="left:1478.30px;top:512.00px;width:82.80px;height:82.80px;border-radius:50%;background:#1d1d1d;"></div>
<span class="t" style="left:1160.30px;top:628.92px;font-size:10.5px;line-height:10.5px;color:#cfcfcf;transform:scaleX(0.9121);">Shadows</span>
<span class="t" style="left:1328.90px;top:590.32px;font-size:10.5px;line-height:10.5px;color:#cfcfcf;transform:scaleX(0.9764);">Midtones</span>
<span class="t" style="left:1497.10px;top:628.92px;font-size:10.5px;line-height:10.5px;color:#cfcfcf;transform:scaleX(0.9478);">Highlights</span>
</div></body></html>
